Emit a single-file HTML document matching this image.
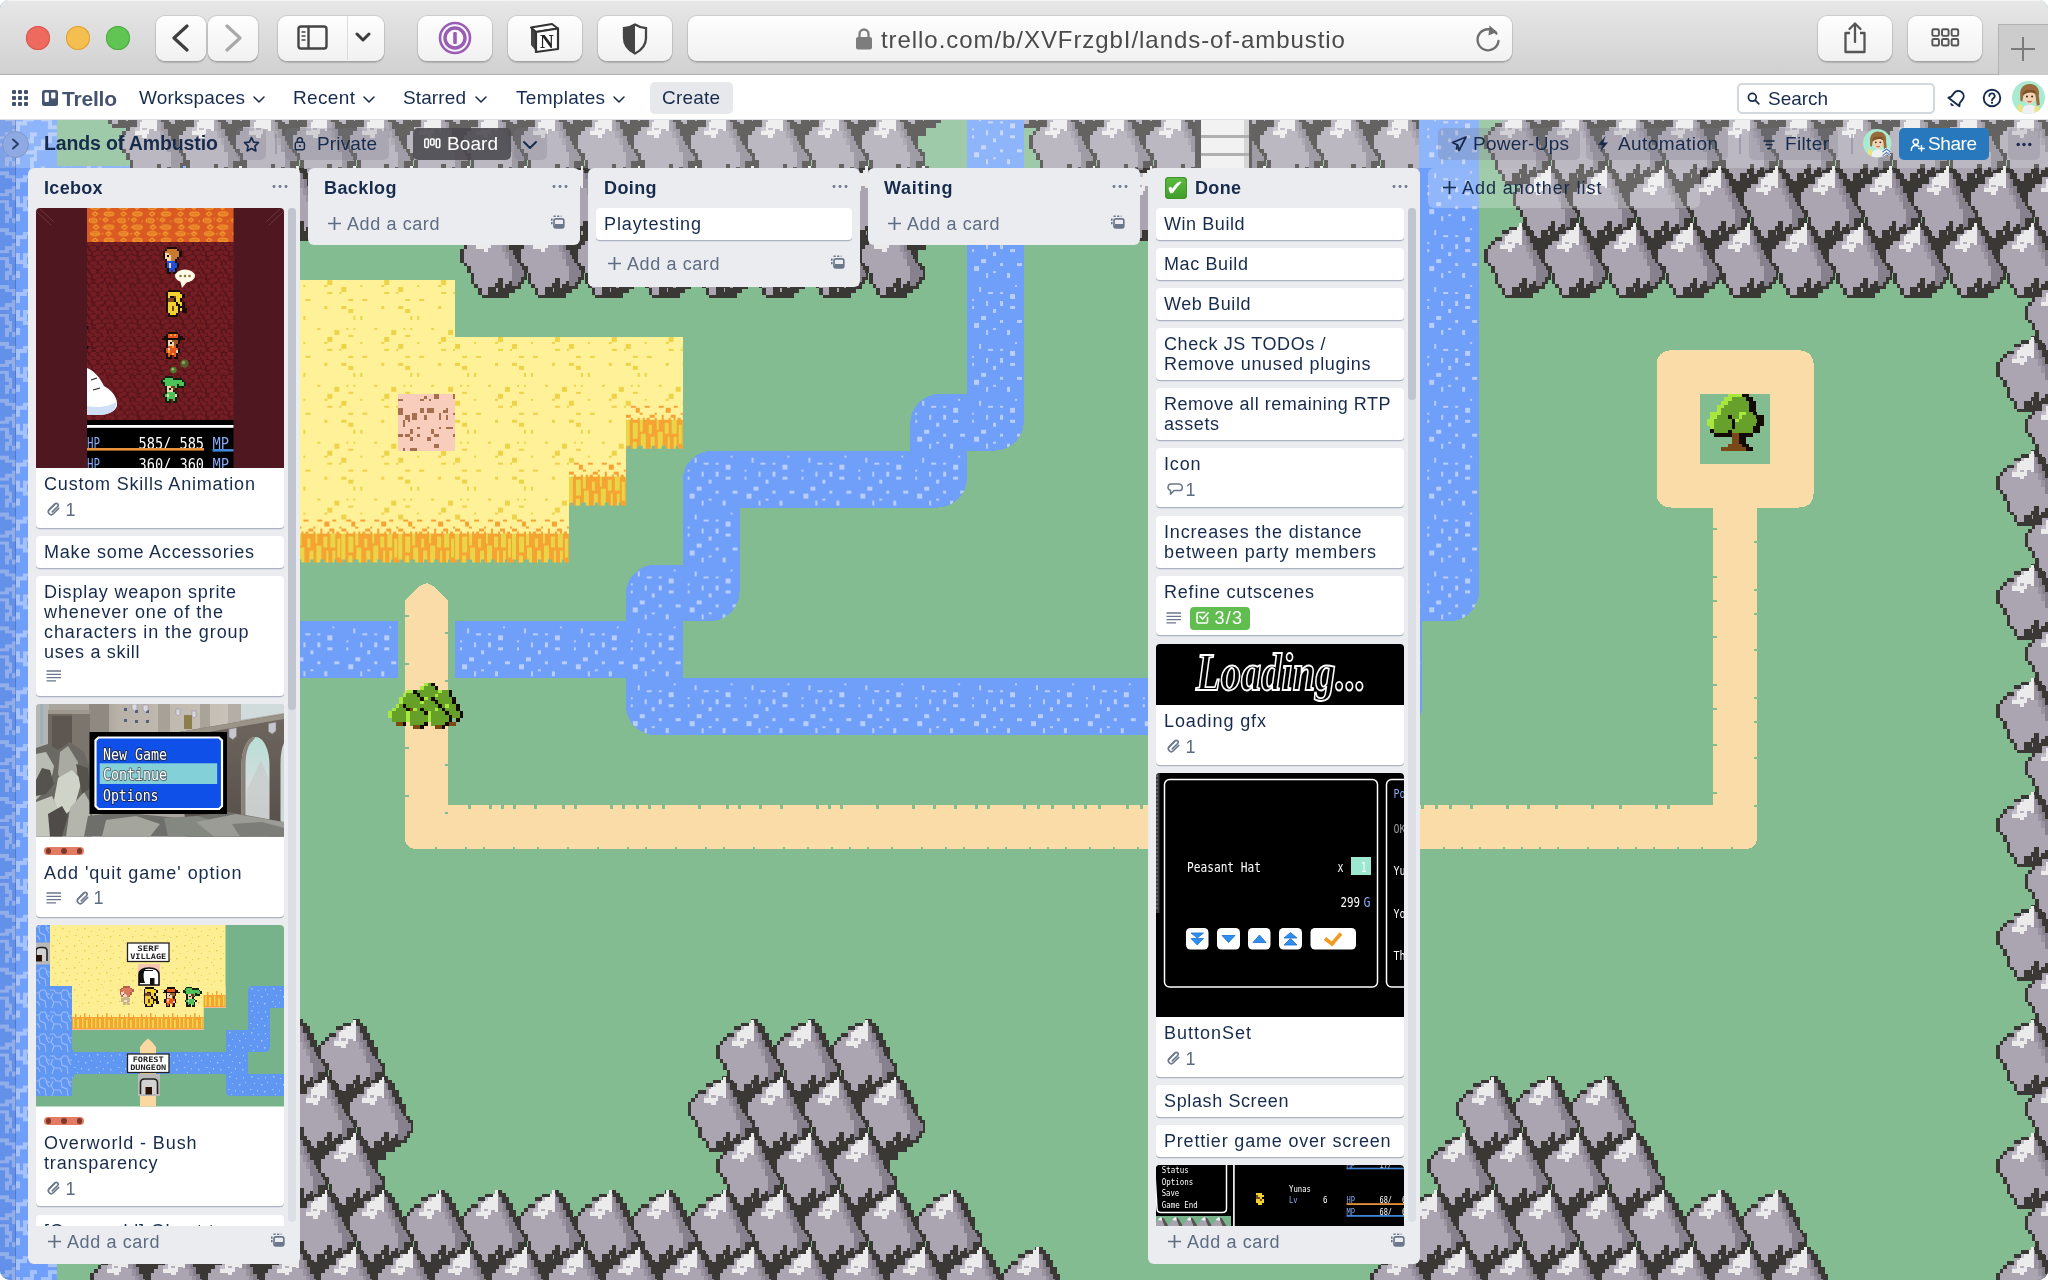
<!DOCTYPE html><html lang="en"><head><meta charset="utf-8"><title>Lands of Ambustio | Trello</title><style>
*{box-sizing:border-box}
html,body{margin:0;padding:0}
body{width:2048px;height:1280px;overflow:hidden;background:#fff;font-family:"Liberation Sans",sans-serif;color:#172b4d}
#win{position:absolute;left:0;top:0;width:2048px;height:1280px;overflow:hidden;border-radius:9px 9px 10px 10px}
.abs{position:absolute}
.t{position:absolute;white-space:nowrap;line-height:1;opacity:.999}
svg{display:block}

#saf{position:absolute;left:0;top:0;width:2048px;height:75px;background:linear-gradient(#e7e7e7,#d1d1d1);border-bottom:1px solid #b1b1b1;box-shadow:inset 0 1px 0 #f4f4f4}
.sb{position:absolute;top:15.5px;height:45px;border-radius:9px;background:linear-gradient(#fefefe,#f1f1f1);box-shadow:0 0 0 1px rgba(0,0,0,.09),0 1.5px 1.5px rgba(0,0,0,.16)}
.tl{position:absolute;top:26px;width:24px;height:24px;border-radius:50%}
#thd{position:absolute;left:0;top:75px;width:2048px;height:45px;background:#fff;border-bottom:1.5px solid #dfe2e7}
#thd .t{color:#172b4d}
#bhd{position:absolute;left:0;top:120px;width:2048px;height:48px;background:rgba(255,255,255,.22)}
.bb{position:absolute;top:128px;height:32px;border-radius:5px;background:rgba(120,120,140,.26)}

.list{position:absolute;top:168px;width:272px;background:#ebecf0;border-radius:6px}
.card{position:absolute;width:248px;background:#fff;border-radius:4px;box-shadow:0 1.3px 0 rgba(9,30,66,.27);overflow:hidden}
.ct{color:#172b4d}
.mut{color:#5e6c84}
</style></head><body><div id="win"><svg width="2048" height="1280" viewBox="0 0 2048 1280" shape-rendering="crispEdges" style="position:absolute;left:0;top:0"><defs><pattern id="pwater" width="48" height="48" patternUnits="userSpaceOnUse" patternTransform="translate(0 -4.4) scale(1.18519)"><rect width="48" height="48" fill="#6f9ff8"/><path d="M40 4h2v2h-2zM10 6h2v4h-2zM18 10h4v2h-4zM28 10h2v2h-2zM36 12h4v4h-4zM4 16h2v2h-2zM16 18h2v4h-2zM28 18h2v4h-2zM4 22h2v2h-2zM36 22h4v2h-4zM22 24h2v4h-2zM12 30h4v4h-4zM28 34h2v2h-2zM42 34h4v2h-4zM6 36h4v4h-4zM22 40h2v2h-2zM16 42h2v4h-2zM34 42h2v4h-2z" fill="#b9cdfa"/></pattern><pattern id="psand" width="48" height="48" patternUnits="userSpaceOnUse" patternTransform="translate(0 -4.4) scale(1.18519)"><rect width="48" height="48" fill="#fff197"/><path d="M36 0h4v4h-4zM34 4h2v2h-2zM16 4h2v2h-2zM0 6h4v4h-4zM46 10h2v2h-2zM36 10h4v2h-4zM6 16h4v2h-4zM18 16h4v2h-4zM0 22h4v2h-4zM34 22h2v2h-2zM6 24h4v4h-4zM10 30h2v4h-2zM16 30h2v4h-2zM4 40h2v2h-2zM10 40h2v2h-2zM28 40h2v2h-2zM42 42h4v4h-4zM6 46h4v2h-4z" fill="#ecd348"/></pattern><pattern id="pwheat" width="48" height="48" patternUnits="userSpaceOnUse" patternTransform="translate(0 -4.4) scale(1.18519)"><rect width="48" height="48" fill="#fff197"/><path d="M36 0h4v4h-4zM34 4h2v2h-2zM16 4h2v2h-2zM0 6h4v4h-4z" fill="#ecd348"/><path d="M4 10h4v2h-4zM16 10h4v2h-4zM28 10h4v2h-4zM40 10h4v2h-4zM8 12h4v4h-4zM34 12h4v4h-4zM0 18h4v2h-4zM12 16h2v2h-2zM24 16h2v2h-2zM46 16h2v2h-2zM20 18h4v2h-4zM30 18h2v2h-2zM38 18h4v2h-4z" fill="#f5a332"/><rect x="0" y="22" width="48" height="24" fill="#f5a332"/><path d="M0 22h3v22h-3zM6 24h4v14h-4zM6 40h3v6h-3zM12 22h2v10h-2zM13 34h4v12h-4zM19 26h3v8h-3zM21 36h3v10h-3zM26 22h2v8h-2zM27 32h4v14h-4zM33 24h3v10h-3zM35 36h2v10h-2zM39 22h4v12h-4zM40 36h3v10h-3zM45 26h2v16h-2z" fill="#ead548"/><path d="M4 20h2v4h-2zM10 20h2v3h-2zM18 20h2v5h-2zM24 20h2v3h-2zM30 20h2v4h-2zM36 20h2v3h-2zM44 20h2v5h-2zM14 20h2v2h-2zM40 20h2v2h-2z" fill="#f5a332"/><rect x="0" y="46" width="48" height="2" fill="#84bc92"/><path d="M2 44h2v2h-2zM10 44h4v2h-4zM22 44h2v2h-2zM30 44h4v2h-4zM42 44h2v2h-2z" fill="#84bc92"/></pattern><pattern id="pocean" width="48" height="48" patternUnits="userSpaceOnUse" patternTransform="translate(0 -4.4) scale(1.18519)"><rect width="48" height="48" fill="#6f9ff8"/><path d="M0 6h6v3h6v3h3v6h-3v3h-6v3h-6M15 12h6v-3h6v-3h9v3h6v6h6M12 21v6h3v6h6v3h9v-3h6v-6h6v-6M0 30h6v6h3v6h-3v6M30 36v6h-3v6M42 21h6M21 33v-6h6v-6h3M36 6V0M12 48v-3h3v-3M27 0v6" fill="none" stroke="#a6c2fb" stroke-width="3" stroke-linecap="square"/></pattern><g id="mt"><path d="M39.7 -0.5L47.1 -0.5L47.1 3L50.6 3L50.6 6.5L54.1 6.5L54.1 13L57.6 13L57.6 20L61.2 20L61.2 27L64.7 27L64.7 39.5L68.3 39.5L68.3 43L71.8 43L71.8 56.5L69 56.5L69 61L65.5 61L65.5 66L59.6 66L59.6 70L54.2 70L54.2 75.1L26.4 75.1L26.4 71.6L22.8 71.6L22.8 64.5L19.3 64.5L19.3 61L15.7 61L15.7 50.3L12.2 50.3L12.2 43.2L8.6 43.2L8.6 39.7L5 39.7L5 25.5L8.6 25.5L8.6 21.5L12.2 21.5L12.2 17.4L15.7 17.4L15.7 13.9L22.8 13.9L22.8 6.9L29.9 6.9L29.9 3.3L39.7 3.3Z" fill="#3a3835"/><path d="M39.7 3.3L43 3.3L43 6.5L43 60L40 60L40 64L33 64L33 71.6L26.4 71.6L26.4 64.5L22.8 64.5L22.8 61L19.3 61L19.3 50.3L15.7 50.3L15.7 43.2L12.2 43.2L12.2 39.7L8.6 39.7L8.6 25.5L12.2 25.5L12.2 21.5L15.7 21.5L15.7 17.4L22.8 17.4L22.8 10.4L29.9 10.4L29.9 6.9L39.7 6.9Z" fill="#aaa5b1"/><path d="M43 22L46.5 22L46.5 29L50 29L50 36L53.6 36L53.6 43L57.2 43L57.2 57.5L53.6 57.5L53.6 61L50 61L50 64.5L47.5 64.5L47.5 55L43 55Z" fill="#aaa5b1"/><path d="M43 3.3L43.6 3.3L43.6 6.5L47.1 6.5L47.1 13L50.6 13L50.6 20L54.1 20L54.1 27L57.6 27L57.6 32L59.5 32L59.5 36L62 36L62 39.5L64.7 39.5L64.7 43L67 43L67 46.5L69.3 46.5L69.3 54L66 54L66 59L62.5 59L62.5 63L57.2 63L57.2 43L53.6 43L53.6 36L50 36L50 29L46.5 29L46.5 22L43 22Z" fill="#86818c"/><path d="M43 6.5L45 6.5L45 13L47.5 13L47.5 22L50.6 22L50.6 29L53.6 29L53.6 36L50 36L50 29L46.5 29L46.5 22L43 22Z" fill="#98939e"/><path d="M40.3 0L43 0L43 21.3L40.3 21.3L40.3 19.4L35.6 19.4L35.6 24.8L33.3 24.8L33.3 28.3L28.6 28.3L28.6 26L21.2 26L21.2 21.7L26.2 21.7L26.2 12.7L28.6 12.7L28.6 10.4L33.3 10.4L33.3 6.9L37.9 6.9L37.9 3.3L40.3 3.3Z" fill="#ebebeb"/><path d="M22.8 17.4L26.2 17.4L26.2 21.7L21.2 21.7L21.2 19L22.8 19Z" fill="#c2bdc9"/><path d="M29.9 6.9L33.3 6.9L33.3 10.4L29.9 10.4Z" fill="#c2bdc9"/><rect x="28.6" y="18.8" width="4.5" height="2.2" fill="#b5b0bc"/><path d="M43 55h4.5v9.5h-4.5zM36.5 64h3.5v7.6h-3.5zM40 68h3v7h-3z" fill="#3a3835"/><path d="M40.8 64.5h1.6v4h-1.6z" fill="#aaa5b1"/></g></defs><rect width="2048" height="1280" fill="#84bc92"/><path d="M0 0H56.9V166.3H284.4V1247.2H56.9V1280H0Z" fill="url(#pocean)"/><path d="M56.9 280H455.1V336.9H682.7V393.8H625.8V450.7H568.9V507.6H56.9Z" fill="url(#psand)"/><path d="M625.8 393.8h56.9v55.4h-56.9zM568.9 450.7h56.9v55.4h-56.9zM56.9 507.6H568.9V563H56.9Z" fill="url(#pwheat)"/><rect x="398.2" y="393.8" width="56.9" height="56.9" fill="#f8cdbb"/><path d="M398.2 398.6h4.7v2.4h-4.7zM419.6 398.6h4.7v2.4h-4.7zM424.3 396.2h2.4v2.4h-2.4zM429 398.6h2.4v2.4h-2.4zM433.8 393.8h4.7v4.7h-4.7zM452.7 393.8h2.4v4.7h-2.4zM398.2 408h4.7v7.1h-4.7zM419.6 408h4.7v4.7h-4.7zM426.7 408h7.1v4.7h-7.1zM445.6 408h2.4v4.7h-2.4zM405.3 415.2h4.7v4.7h-4.7zM412.4 412.8h4.7v7.1h-4.7zM424.3 415.2h2.4v4.7h-2.4zM438.5 412.8h2.4v7.1h-2.4zM443.3 410.4h2.4v2.4h-2.4zM445.6 415.2h2.4v4.7h-2.4zM452.7 412.8h2.4v2.4h-2.4zM403 419.9h2.4v7.1h-2.4zM407.7 419.9h2.4v2.4h-2.4zM417.2 427h2.4v2.4h-2.4zM438.5 427h2.4v2.4h-2.4zM445.6 427h7.1v2.4h-7.1zM410.1 429.4h2.4v4.7h-2.4zM431.4 429.4h2.4v4.7h-2.4zM398.2 434.1h4.7v2.4h-4.7zM405.3 434.1h4.7v2.4h-4.7zM417.2 434.1h2.4v2.4h-2.4zM433.8 434.1h4.7v2.4h-4.7zM452.7 434.1h2.4v2.4h-2.4zM410.1 436.5h2.4v4.7h-2.4zM426.7 436.5h4.7v4.7h-4.7zM433.8 443.6h4.7v4.7h-4.7zM403 448.3h2.4v2.4h-2.4zM410.1 448.3h7.1v2.4h-7.1z" fill="#a66f4f"/><path d="M967.1 52.5L1024 52.5L1024 420.7A30 30 0 0 1 994 450.7L967.1 450.7L967.1 477.6A30 30 0 0 1 937.1 507.6L739.6 507.6L739.6 591.4A30 30 0 0 1 709.6 621.4L682.7 621.4L682.7 678.3L1365.3 678.3L1365.3 594.5A30 30 0 0 1 1395.3 564.5L1422.2 564.5L1422.2 52.5L1479.1 52.5L1479.1 591.4A30 30 0 0 1 1449.1 621.4L1422.2 621.4L1422.2 705.2A30 30 0 0 1 1392.2 735.2L655.8 735.2A30 30 0 0 1 625.8 705.2L625.8 678.3L284.4 678.3L284.4 621.4L625.8 621.4L625.8 594.5A30 30 0 0 1 655.8 564.5L682.7 564.5L682.7 480.7A30 30 0 0 1 712.7 450.7L910.2 450.7L910.2 423.8A30 30 0 0 1 940.2 393.8L967.1 393.8Z" fill="url(#pwater)"/><rect x="398.2" y="620.4" width="56.9" height="58.9" fill="#84bc92"/><path d="M404.9 600.5L411.9 593.5 L418.9 586.5 L426.7 583 L434.4 586.5 L448.4 600.5L448.4 805.4 L1713.4 805.4 L1713.4 502.6L1756.9 502.6 L1756.9 836.9Q1756.9 848.9 1744.9 848.9L416.9 848.9 Q404.9 848.9 404.9 836.9 Z" fill="#fadca8"/><path d="M1672.5 350.3H1797.7Q1813.7 350.3 1813.7 366.3V491.6Q1813.7 507.6 1797.7 507.6H1672.5Q1656.5 507.6 1656.5 491.6V366.3Q1656.5 350.3 1672.5 350.3ZM1700 393.8V464.1H1770.3V393.8Z" fill="#fadca8" fill-rule="evenodd"/><path d="M468.4 805.4h2.4v3.6h-2.4zM489.4 805.4h2.4v3.6h-2.4zM501.4 805.4h2.4v3.6h-2.4zM513.4 805.4h2.4v3.6h-2.4zM534.4 805.4h2.4v3.6h-2.4zM562.4 805.4h2.4v3.6h-2.4zM574.4 805.4h2.4v3.6h-2.4zM610.4 805.4h2.4v3.6h-2.4zM622.4 805.4h2.4v3.6h-2.4zM636.4 805.4h2.4v3.6h-2.4zM648.4 805.4h2.4v3.6h-2.4zM662.4 805.4h2.4v3.6h-2.4zM698.4 805.4h2.4v3.6h-2.4zM726.4 805.4h2.4v3.6h-2.4zM738.4 805.4h2.4v3.6h-2.4zM759.4 805.4h2.4v3.6h-2.4zM780.4 805.4h2.4v3.6h-2.4zM816.4 805.4h2.4v3.6h-2.4zM828.4 805.4h2.4v3.6h-2.4zM840.4 805.4h2.4v3.6h-2.4zM876.4 805.4h2.4v3.6h-2.4zM912.4 805.4h2.4v3.6h-2.4zM933.4 805.4h2.4v3.6h-2.4zM954.4 805.4h2.4v3.6h-2.4zM975.4 805.4h2.4v3.6h-2.4zM987.4 805.4h2.4v3.6h-2.4zM1023.4 805.4h2.4v3.6h-2.4zM1037.4 805.4h2.4v3.6h-2.4zM1051.4 805.4h2.4v3.6h-2.4zM1072.4 805.4h2.4v3.6h-2.4zM1084.4 805.4h2.4v3.6h-2.4zM1098.4 805.4h2.4v3.6h-2.4zM1126.4 805.4h2.4v3.6h-2.4zM1140.4 805.4h2.4v3.6h-2.4zM1168.4 805.4h2.4v3.6h-2.4zM1204.4 805.4h2.4v3.6h-2.4zM1216.4 805.4h2.4v3.6h-2.4zM1252.4 805.4h2.4v3.6h-2.4zM1288.4 805.4h2.4v3.6h-2.4zM1324.4 805.4h2.4v3.6h-2.4zM1336.4 805.4h2.4v3.6h-2.4zM1372.4 805.4h2.4v3.6h-2.4zM1393.4 805.4h2.4v3.6h-2.4zM1421.4 805.4h2.4v3.6h-2.4zM1435.4 805.4h2.4v3.6h-2.4zM1449.4 805.4h2.4v3.6h-2.4zM1470.4 805.4h2.4v3.6h-2.4zM1506.4 805.4h2.4v3.6h-2.4zM1527.4 805.4h2.4v3.6h-2.4zM1555.4 805.4h2.4v3.6h-2.4zM1591.4 805.4h2.4v3.6h-2.4zM1619.4 805.4h2.4v3.6h-2.4zM1655.4 805.4h2.4v3.6h-2.4zM1667.4 805.4h2.4v3.6h-2.4zM404.9 614.5h3.6v2.4h-3.6zM445.4 631.5h3v2.4h-3zM404.9 662.5h3.6v2.4h-3.6zM445.4 679.5h3v2.4h-3zM404.9 698.5h3.6v2.4h-3.6zM445.4 715.5h3v2.4h-3zM404.9 746.5h3.6v2.4h-3.6zM445.4 763.5h3v2.4h-3zM404.9 794.5h3.6v2.4h-3.6zM445.4 811.5h3v2.4h-3zM1713.4 527.6h3.6v2.4h-3.6zM1753.9 540.6h3v2.4h-3zM1713.4 575.6h3.6v2.4h-3.6zM1753.9 588.6h3v2.4h-3zM1713.4 599.6h3.6v2.4h-3.6zM1753.9 612.6h3v2.4h-3zM1713.4 635.6h3.6v2.4h-3.6zM1753.9 648.6h3v2.4h-3zM1713.4 683.6h3.6v2.4h-3.6zM1753.9 696.6h3v2.4h-3zM1713.4 707.6h3.6v2.4h-3.6zM1753.9 720.6h3v2.4h-3zM1713.4 743.6h3.6v2.4h-3.6zM1753.9 756.6h3v2.4h-3zM1713.4 791.6h3.6v2.4h-3.6zM1753.9 804.6h3v2.4h-3zM434.9 846.5h2.4v2.4h-2.4zM464.9 846.5h2.4v2.4h-2.4zM482.9 846.5h2.4v2.4h-2.4zM512.9 846.5h2.4v2.4h-2.4zM536.9 846.5h2.4v2.4h-2.4zM566.9 846.5h2.4v2.4h-2.4zM596.9 846.5h2.4v2.4h-2.4zM626.9 846.5h2.4v2.4h-2.4zM644.9 846.5h2.4v2.4h-2.4zM674.9 846.5h2.4v2.4h-2.4zM704.9 846.5h2.4v2.4h-2.4zM722.9 846.5h2.4v2.4h-2.4zM752.9 846.5h2.4v2.4h-2.4zM782.9 846.5h2.4v2.4h-2.4zM806.9 846.5h2.4v2.4h-2.4zM830.9 846.5h2.4v2.4h-2.4zM848.9 846.5h2.4v2.4h-2.4zM866.9 846.5h2.4v2.4h-2.4zM890.9 846.5h2.4v2.4h-2.4zM920.9 846.5h2.4v2.4h-2.4zM944.9 846.5h2.4v2.4h-2.4zM962.9 846.5h2.4v2.4h-2.4zM986.9 846.5h2.4v2.4h-2.4zM1004.9 846.5h2.4v2.4h-2.4zM1028.9 846.5h2.4v2.4h-2.4zM1046.9 846.5h2.4v2.4h-2.4zM1064.9 846.5h2.4v2.4h-2.4zM1088.9 846.5h2.4v2.4h-2.4zM1112.9 846.5h2.4v2.4h-2.4zM1136.9 846.5h2.4v2.4h-2.4zM1154.9 846.5h2.4v2.4h-2.4zM1172.9 846.5h2.4v2.4h-2.4zM1202.9 846.5h2.4v2.4h-2.4zM1232.9 846.5h2.4v2.4h-2.4zM1250.9 846.5h2.4v2.4h-2.4zM1274.9 846.5h2.4v2.4h-2.4zM1304.9 846.5h2.4v2.4h-2.4zM1334.9 846.5h2.4v2.4h-2.4zM1358.9 846.5h2.4v2.4h-2.4zM1388.9 846.5h2.4v2.4h-2.4zM1412.9 846.5h2.4v2.4h-2.4zM1442.9 846.5h2.4v2.4h-2.4zM1460.9 846.5h2.4v2.4h-2.4zM1478.9 846.5h2.4v2.4h-2.4zM1502.9 846.5h2.4v2.4h-2.4zM1520.9 846.5h2.4v2.4h-2.4zM1538.9 846.5h2.4v2.4h-2.4zM1556.9 846.5h2.4v2.4h-2.4zM1586.9 846.5h2.4v2.4h-2.4zM1616.9 846.5h2.4v2.4h-2.4zM1634.9 846.5h2.4v2.4h-2.4zM1652.9 846.5h2.4v2.4h-2.4zM1676.9 846.5h2.4v2.4h-2.4zM1700.9 846.5h2.4v2.4h-2.4zM1730.9 846.5h2.4v2.4h-2.4z" fill="#84bc92"/><path d="M1728 393.8h14.2v3.8h-14.2zM1724.4 397.4h7.1v3.8h-7.1zM1720.9 400.9h7.1v3.8h-7.1zM1717.3 404.5h7.1v3.8h-7.1zM1717.3 408h3.6v3.8h-3.6zM1710.2 411.6h10.7v3.8h-10.7zM1738.7 411.6h7.1v3.8h-7.1zM1710.2 415.2h7.1v3.8h-7.1zM1738.7 415.2h3.6v3.8h-3.6zM1706.7 418.7h7.1v3.8h-7.1zM1735.1 418.7h3.6v3.8h-3.6zM1706.7 422.3h7.1v3.8h-7.1zM1710.2 425.8h3.6v3.8h-3.6z" fill="#a9e73f"/><path d="M1742.2 393.8h7.1v3.8h-7.1zM1745.8 397.4h7.1v3.8h-7.1zM1749.3 400.9h7.1v3.8h-7.1zM1749.3 404.5h7.1v3.8h-7.1zM1749.3 408h7.1v3.8h-7.1zM1752.9 411.6h3.6v3.8h-3.6zM1728 415.2h3.6v3.8h-3.6zM1756.4 415.2h7.1v3.8h-7.1zM1731.6 418.7h3.6v3.8h-3.6zM1756.4 418.7h7.1v3.8h-7.1zM1731.6 422.3h3.6v3.8h-3.6zM1756.4 422.3h7.1v3.8h-7.1zM1731.6 425.8h3.6v3.8h-3.6zM1752.9 425.8h7.1v3.8h-7.1zM1710.2 429.4h3.6v3.8h-3.6zM1728 429.4h3.6v3.8h-3.6zM1752.9 429.4h7.1v3.8h-7.1zM1713.8 432.9h17.8v3.8h-17.8zM1738.7 432.9h14.2v3.8h-14.2zM1738.7 436.5h7.1v3.8h-7.1zM1738.7 440h7.1v3.8h-7.1zM1742.2 443.6h7.1v3.8h-7.1zM1745.8 447.2h7.1v3.8h-7.1z" fill="#140a04"/><path d="M1731.6 397.4h14.2v3.8h-14.2zM1728 400.9h21.3v3.8h-21.3zM1724.4 404.5h24.9v3.8h-24.9zM1720.9 408h28.4v3.8h-28.4zM1720.9 411.6h17.8v3.8h-17.8zM1745.8 411.6h7.1v3.8h-7.1zM1717.3 415.2h10.7v3.8h-10.7zM1731.6 415.2h7.1v3.8h-7.1zM1742.2 415.2h14.2v3.8h-14.2zM1713.8 418.7h17.8v3.8h-17.8zM1738.7 418.7h17.8v3.8h-17.8zM1713.8 422.3h17.8v3.8h-17.8zM1735.1 422.3h21.3v3.8h-21.3zM1713.8 425.8h17.8v3.8h-17.8zM1735.1 425.8h17.8v3.8h-17.8zM1713.8 429.4h14.2v3.8h-14.2zM1731.6 429.4h21.3v3.8h-21.3z" fill="#67a02a"/><path d="M1731.6 432.9h7.1v3.8h-7.1zM1731.6 436.5h7.1v3.8h-7.1zM1731.6 440h7.1v3.8h-7.1zM1728 443.6h14.2v3.8h-14.2zM1720.9 447.2h24.9v3.8h-24.9z" fill="#7a4716"/><g shape-rendering="crispEdges"><use href="#mt" x="85.3" y="52.5"/><use href="#mt" x="142.2" y="52.5"/><use href="#mt" x="199.1" y="52.5"/><use href="#mt" x="256" y="52.5"/><use href="#mt" x="312.9" y="52.5"/><use href="#mt" x="369.8" y="52.5"/><use href="#mt" x="426.7" y="52.5"/><use href="#mt" x="483.6" y="52.5"/><use href="#mt" x="540.4" y="52.5"/><use href="#mt" x="597.3" y="52.5"/><use href="#mt" x="654.2" y="52.5"/><use href="#mt" x="711.1" y="52.5"/><use href="#mt" x="768" y="52.5"/><use href="#mt" x="824.9" y="52.5"/><use href="#mt" x="881.8" y="52.5"/><use href="#mt" x="995.6" y="52.5"/><use href="#mt" x="1052.4" y="52.5"/><use href="#mt" x="1109.3" y="52.5"/><use href="#mt" x="1166.2" y="52.5"/><use href="#mt" x="1223.1" y="52.5"/><use href="#mt" x="1280" y="52.5"/><use href="#mt" x="1336.9" y="52.5"/><use href="#mt" x="1507.6" y="52.5"/><use href="#mt" x="1564.4" y="52.5"/><use href="#mt" x="1621.3" y="52.5"/><use href="#mt" x="1678.2" y="52.5"/><use href="#mt" x="1735.1" y="52.5"/><use href="#mt" x="1792" y="52.5"/><use href="#mt" x="1848.9" y="52.5"/><use href="#mt" x="1905.8" y="52.5"/><use href="#mt" x="1962.7" y="52.5"/><use href="#mt" x="2019.6" y="52.5"/><path d="M169.8 125.4h17v11h-17zM147.8 104.4h9v10h-9zM226.7 125.4h17v11h-17zM204.7 104.4h9v10h-9zM283.6 125.4h17v11h-17zM261.6 104.4h9v10h-9zM340.4 125.4h17v11h-17zM318.4 104.4h9v10h-9zM397.3 125.4h17v11h-17zM375.3 104.4h9v10h-9zM454.2 125.4h17v11h-17zM432.2 104.4h9v10h-9zM511.1 125.4h17v11h-17zM489.1 104.4h9v10h-9zM568 125.4h17v11h-17zM546 104.4h9v10h-9zM624.9 125.4h17v11h-17zM602.9 104.4h9v10h-9zM681.8 125.4h17v11h-17zM659.8 104.4h9v10h-9zM738.7 125.4h17v11h-17zM716.7 104.4h9v10h-9zM795.6 125.4h17v11h-17zM773.6 104.4h9v10h-9zM852.4 125.4h17v11h-17zM830.4 104.4h9v10h-9zM909.3 125.4h17v11h-17zM887.3 104.4h9v10h-9zM1080 125.4h17v11h-17zM1058 104.4h9v10h-9zM1136.9 125.4h17v11h-17zM1114.9 104.4h9v10h-9zM1193.8 125.4h17v11h-17zM1171.8 104.4h9v10h-9zM1250.7 125.4h17v11h-17zM1228.7 104.4h9v10h-9zM1307.6 125.4h17v11h-17zM1285.6 104.4h9v10h-9zM1364.4 125.4h17v11h-17zM1342.4 104.4h9v10h-9zM1399.3 104.4h9v10h-9zM1535.1 125.4h17v11h-17zM1592 125.4h17v11h-17zM1570 104.4h9v10h-9zM1648.9 125.4h17v11h-17zM1626.9 104.4h9v10h-9zM1705.8 125.4h17v11h-17zM1683.8 104.4h9v10h-9zM1762.7 125.4h17v11h-17zM1740.7 104.4h9v10h-9zM1819.6 125.4h17v11h-17zM1797.6 104.4h9v10h-9zM1876.4 125.4h17v11h-17zM1854.4 104.4h9v10h-9zM1933.3 125.4h17v11h-17zM1911.3 104.4h9v10h-9zM1990.2 125.4h17v11h-17zM1968.2 104.4h9v10h-9zM2047.1 125.4h17v11h-17zM2025.1 104.4h9v10h-9z" fill="#3a3835"/><use href="#mt" x="113.8" y="109.4"/><use href="#mt" x="170.7" y="109.4"/><use href="#mt" x="227.6" y="109.4"/><use href="#mt" x="284.4" y="109.4"/><use href="#mt" x="341.3" y="109.4"/><use href="#mt" x="398.2" y="109.4"/><use href="#mt" x="455.1" y="109.4"/><use href="#mt" x="512" y="109.4"/><use href="#mt" x="568.9" y="109.4"/><use href="#mt" x="625.8" y="109.4"/><use href="#mt" x="682.7" y="109.4"/><use href="#mt" x="739.6" y="109.4"/><use href="#mt" x="796.4" y="109.4"/><use href="#mt" x="853.3" y="109.4"/><use href="#mt" x="1024" y="109.4"/><use href="#mt" x="1080.9" y="109.4"/><use href="#mt" x="1137.8" y="109.4"/><use href="#mt" x="1194.7" y="109.4"/><use href="#mt" x="1251.6" y="109.4"/><use href="#mt" x="1308.4" y="109.4"/><use href="#mt" x="1365.3" y="109.4"/><use href="#mt" x="1479.1" y="109.4"/><use href="#mt" x="1536" y="109.4"/><use href="#mt" x="1592.9" y="109.4"/><use href="#mt" x="1649.8" y="109.4"/><use href="#mt" x="1706.7" y="109.4"/><use href="#mt" x="1763.6" y="109.4"/><use href="#mt" x="1820.4" y="109.4"/><use href="#mt" x="1877.3" y="109.4"/><use href="#mt" x="1934.2" y="109.4"/><use href="#mt" x="1991.1" y="109.4"/><path d="M255.1 182.3h17v11h-17zM233.1 161.3h9v10h-9zM312 182.3h17v11h-17zM290 161.3h9v10h-9zM368.9 182.3h17v11h-17zM346.9 161.3h9v10h-9zM425.8 182.3h17v11h-17zM403.8 161.3h9v10h-9zM482.7 182.3h17v11h-17zM460.7 161.3h9v10h-9zM539.6 182.3h17v11h-17zM517.6 161.3h9v10h-9zM596.4 182.3h17v11h-17zM574.4 161.3h9v10h-9zM653.3 182.3h17v11h-17zM631.3 161.3h9v10h-9zM710.2 182.3h17v11h-17zM688.2 161.3h9v10h-9zM767.1 182.3h17v11h-17zM745.1 161.3h9v10h-9zM824 182.3h17v11h-17zM802 161.3h9v10h-9zM880.9 182.3h17v11h-17zM858.9 161.3h9v10h-9zM915.8 161.3h9v10h-9zM1108.4 182.3h17v11h-17zM1086.4 161.3h9v10h-9zM1165.3 182.3h17v11h-17zM1143.3 161.3h9v10h-9zM1222.2 182.3h17v11h-17zM1200.2 161.3h9v10h-9zM1279.1 182.3h17v11h-17zM1257.1 161.3h9v10h-9zM1336 182.3h17v11h-17zM1314 161.3h9v10h-9zM1392.9 182.3h17v11h-17zM1370.9 161.3h9v10h-9zM1563.6 182.3h17v11h-17zM1541.6 161.3h9v10h-9zM1620.4 182.3h17v11h-17zM1598.4 161.3h9v10h-9zM1677.3 182.3h17v11h-17zM1655.3 161.3h9v10h-9zM1734.2 182.3h17v11h-17zM1712.2 161.3h9v10h-9zM1791.1 182.3h17v11h-17zM1769.1 161.3h9v10h-9zM1848 182.3h17v11h-17zM1826 161.3h9v10h-9zM1904.9 182.3h17v11h-17zM1882.9 161.3h9v10h-9zM1961.8 182.3h17v11h-17zM1939.8 161.3h9v10h-9zM2018.7 182.3h17v11h-17zM1996.7 161.3h9v10h-9zM2053.6 161.3h9v10h-9z" fill="#3a3835"/><use href="#mt" x="199.1" y="166.3"/><use href="#mt" x="256" y="166.3"/><use href="#mt" x="312.9" y="166.3"/><use href="#mt" x="369.8" y="166.3"/><use href="#mt" x="426.7" y="166.3"/><use href="#mt" x="483.6" y="166.3"/><use href="#mt" x="540.4" y="166.3"/><use href="#mt" x="597.3" y="166.3"/><use href="#mt" x="654.2" y="166.3"/><use href="#mt" x="711.1" y="166.3"/><use href="#mt" x="768" y="166.3"/><use href="#mt" x="824.9" y="166.3"/><use href="#mt" x="881.8" y="166.3"/><use href="#mt" x="1052.4" y="166.3"/><use href="#mt" x="1109.3" y="166.3"/><use href="#mt" x="1166.2" y="166.3"/><use href="#mt" x="1223.1" y="166.3"/><use href="#mt" x="1280" y="166.3"/><use href="#mt" x="1336.9" y="166.3"/><use href="#mt" x="1507.6" y="166.3"/><use href="#mt" x="1564.4" y="166.3"/><use href="#mt" x="1621.3" y="166.3"/><use href="#mt" x="1678.2" y="166.3"/><use href="#mt" x="1735.1" y="166.3"/><use href="#mt" x="1792" y="166.3"/><use href="#mt" x="1848.9" y="166.3"/><use href="#mt" x="1905.8" y="166.3"/><use href="#mt" x="1962.7" y="166.3"/><use href="#mt" x="2019.6" y="166.3"/><path d="M511.1 239.2h17v11h-17zM489.1 218.2h9v10h-9zM568 239.2h17v11h-17zM546 218.2h9v10h-9zM624.9 239.2h17v11h-17zM602.9 218.2h9v10h-9zM681.8 239.2h17v11h-17zM659.8 218.2h9v10h-9zM738.7 239.2h17v11h-17zM716.7 218.2h9v10h-9zM795.6 239.2h17v11h-17zM773.6 218.2h9v10h-9zM852.4 239.2h17v11h-17zM830.4 218.2h9v10h-9zM909.3 239.2h17v11h-17zM887.3 218.2h9v10h-9zM1535.1 239.2h17v11h-17zM1592 239.2h17v11h-17zM1570 218.2h9v10h-9zM1648.9 239.2h17v11h-17zM1626.9 218.2h9v10h-9zM1705.8 239.2h17v11h-17zM1683.8 218.2h9v10h-9zM1762.7 239.2h17v11h-17zM1740.7 218.2h9v10h-9zM1819.6 239.2h17v11h-17zM1797.6 218.2h9v10h-9zM1876.4 239.2h17v11h-17zM1854.4 218.2h9v10h-9zM1933.3 239.2h17v11h-17zM1911.3 218.2h9v10h-9zM1990.2 239.2h17v11h-17zM1968.2 218.2h9v10h-9zM2047.1 239.2h17v11h-17zM2025.1 218.2h9v10h-9z" fill="#3a3835"/><use href="#mt" x="455.1" y="223.2"/><use href="#mt" x="512" y="223.2"/><use href="#mt" x="568.9" y="223.2"/><use href="#mt" x="625.8" y="223.2"/><use href="#mt" x="682.7" y="223.2"/><use href="#mt" x="739.6" y="223.2"/><use href="#mt" x="796.4" y="223.2"/><use href="#mt" x="853.3" y="223.2"/><use href="#mt" x="1479.1" y="223.2"/><use href="#mt" x="1536" y="223.2"/><use href="#mt" x="1592.9" y="223.2"/><use href="#mt" x="1649.8" y="223.2"/><use href="#mt" x="1706.7" y="223.2"/><use href="#mt" x="1763.6" y="223.2"/><use href="#mt" x="1820.4" y="223.2"/><use href="#mt" x="1877.3" y="223.2"/><use href="#mt" x="1934.2" y="223.2"/><use href="#mt" x="1991.1" y="223.2"/><path d="M2053.6 275h9v10h-9z" fill="#3a3835"/><use href="#mt" x="2019.6" y="280"/><path d="M2047.1 352.9h17v11h-17z" fill="#3a3835"/><use href="#mt" x="1991.1" y="336.9"/><path d="M2053.6 388.8h9v10h-9z" fill="#3a3835"/><use href="#mt" x="2019.6" y="393.8"/><path d="M2047.1 466.7h17v11h-17z" fill="#3a3835"/><use href="#mt" x="1991.1" y="450.7"/><path d="M2053.6 502.6h9v10h-9z" fill="#3a3835"/><use href="#mt" x="2019.6" y="507.6"/><path d="M2047.1 580.5h17v11h-17z" fill="#3a3835"/><use href="#mt" x="1991.1" y="564.5"/><path d="M2053.6 616.4h9v10h-9z" fill="#3a3835"/><use href="#mt" x="2019.6" y="621.4"/><path d="M2047.1 694.3h17v11h-17z" fill="#3a3835"/><use href="#mt" x="1991.1" y="678.3"/><path d="M2053.6 730.2h9v10h-9z" fill="#3a3835"/><use href="#mt" x="2019.6" y="735.2"/><path d="M2047.1 808h17v11h-17z" fill="#3a3835"/><use href="#mt" x="1991.1" y="792"/><path d="M2053.6 843.9h9v10h-9z" fill="#3a3835"/><use href="#mt" x="2019.6" y="848.9"/><path d="M2047.1 921.8h17v11h-17z" fill="#3a3835"/><use href="#mt" x="1991.1" y="905.8"/><path d="M2053.6 957.7h9v10h-9z" fill="#3a3835"/><use href="#mt" x="2019.6" y="962.7"/><path d="M2047.1 1035.6h17v11h-17z" fill="#3a3835"/><use href="#mt" x="1991.1" y="1019.6"/><use href="#mt" x="199.1" y="1019.6"/><use href="#mt" x="256" y="1019.6"/><use href="#mt" x="312.9" y="1019.6"/><use href="#mt" x="711.1" y="1019.6"/><use href="#mt" x="768" y="1019.6"/><use href="#mt" x="824.9" y="1019.6"/><path d="M2053.6 1071.5h9v10h-9zM226.7 1092.5h17v11h-17zM283.6 1092.5h17v11h-17zM261.6 1071.5h9v10h-9zM340.4 1092.5h17v11h-17zM318.4 1071.5h9v10h-9zM375.3 1071.5h9v10h-9zM738.7 1092.5h17v11h-17zM795.6 1092.5h17v11h-17zM773.6 1071.5h9v10h-9zM852.4 1092.5h17v11h-17zM830.4 1071.5h9v10h-9zM887.3 1071.5h9v10h-9z" fill="#3a3835"/><use href="#mt" x="2019.6" y="1076.5"/><use href="#mt" x="170.7" y="1076.5"/><use href="#mt" x="227.6" y="1076.5"/><use href="#mt" x="284.4" y="1076.5"/><use href="#mt" x="341.3" y="1076.5"/><use href="#mt" x="682.7" y="1076.5"/><use href="#mt" x="739.6" y="1076.5"/><use href="#mt" x="796.4" y="1076.5"/><use href="#mt" x="853.3" y="1076.5"/><use href="#mt" x="1450.7" y="1076.5"/><use href="#mt" x="1507.6" y="1076.5"/><use href="#mt" x="1564.4" y="1076.5"/><path d="M2047.1 1149.4h17v11h-17zM198.2 1149.4h17v11h-17zM255.1 1149.4h17v11h-17zM233.1 1128.4h9v10h-9zM312 1149.4h17v11h-17zM290 1128.4h9v10h-9zM368.9 1149.4h17v11h-17zM346.9 1128.4h9v10h-9zM767.1 1149.4h17v11h-17zM745.1 1128.4h9v10h-9zM824 1149.4h17v11h-17zM802 1128.4h9v10h-9zM880.9 1149.4h17v11h-17zM858.9 1128.4h9v10h-9zM1478.2 1149.4h17v11h-17zM1535.1 1149.4h17v11h-17zM1513.1 1128.4h9v10h-9zM1592 1149.4h17v11h-17zM1570 1128.4h9v10h-9zM1626.9 1128.4h9v10h-9z" fill="#3a3835"/><use href="#mt" x="1991.1" y="1133.4"/><use href="#mt" x="142.2" y="1133.4"/><use href="#mt" x="199.1" y="1133.4"/><use href="#mt" x="256" y="1133.4"/><use href="#mt" x="312.9" y="1133.4"/><use href="#mt" x="711.1" y="1133.4"/><use href="#mt" x="768" y="1133.4"/><use href="#mt" x="824.9" y="1133.4"/><use href="#mt" x="1422.2" y="1133.4"/><use href="#mt" x="1479.1" y="1133.4"/><use href="#mt" x="1536" y="1133.4"/><use href="#mt" x="1592.9" y="1133.4"/><path d="M2053.6 1185.3h9v10h-9zM169.8 1206.3h17v11h-17zM226.7 1206.3h17v11h-17zM204.7 1185.3h9v10h-9zM283.6 1206.3h17v11h-17zM261.6 1185.3h9v10h-9zM340.4 1206.3h17v11h-17zM318.4 1185.3h9v10h-9zM375.3 1185.3h9v10h-9zM738.7 1206.3h17v11h-17zM795.6 1206.3h17v11h-17zM773.6 1185.3h9v10h-9zM852.4 1206.3h17v11h-17zM830.4 1185.3h9v10h-9zM887.3 1185.3h9v10h-9zM1449.8 1206.3h17v11h-17zM1506.7 1206.3h17v11h-17zM1484.7 1185.3h9v10h-9zM1563.6 1206.3h17v11h-17zM1541.6 1185.3h9v10h-9zM1620.4 1206.3h17v11h-17zM1598.4 1185.3h9v10h-9zM1655.3 1185.3h9v10h-9z" fill="#3a3835"/><use href="#mt" x="2019.6" y="1190.3"/><use href="#mt" x="113.8" y="1190.3"/><use href="#mt" x="170.7" y="1190.3"/><use href="#mt" x="227.6" y="1190.3"/><use href="#mt" x="284.4" y="1190.3"/><use href="#mt" x="341.3" y="1190.3"/><use href="#mt" x="398.2" y="1190.3"/><use href="#mt" x="455.1" y="1190.3"/><use href="#mt" x="512" y="1190.3"/><use href="#mt" x="568.9" y="1190.3"/><use href="#mt" x="625.8" y="1190.3"/><use href="#mt" x="682.7" y="1190.3"/><use href="#mt" x="739.6" y="1190.3"/><use href="#mt" x="796.4" y="1190.3"/><use href="#mt" x="853.3" y="1190.3"/><use href="#mt" x="910.2" y="1190.3"/><use href="#mt" x="1393.8" y="1190.3"/><use href="#mt" x="1450.7" y="1190.3"/><use href="#mt" x="1507.6" y="1190.3"/><use href="#mt" x="1564.4" y="1190.3"/><use href="#mt" x="1621.3" y="1190.3"/><use href="#mt" x="1678.2" y="1190.3"/><use href="#mt" x="1735.1" y="1190.3"/><path d="M2047.1 1263.2h17v11h-17zM141.3 1263.2h17v11h-17zM198.2 1263.2h17v11h-17zM176.2 1242.2h9v10h-9zM255.1 1263.2h17v11h-17zM233.1 1242.2h9v10h-9zM312 1263.2h17v11h-17zM290 1242.2h9v10h-9zM368.9 1263.2h17v11h-17zM346.9 1242.2h9v10h-9zM425.8 1263.2h17v11h-17zM403.8 1242.2h9v10h-9zM482.7 1263.2h17v11h-17zM460.7 1242.2h9v10h-9zM539.6 1263.2h17v11h-17zM517.6 1242.2h9v10h-9zM596.4 1263.2h17v11h-17zM574.4 1242.2h9v10h-9zM653.3 1263.2h17v11h-17zM631.3 1242.2h9v10h-9zM710.2 1263.2h17v11h-17zM688.2 1242.2h9v10h-9zM767.1 1263.2h17v11h-17zM745.1 1242.2h9v10h-9zM824 1263.2h17v11h-17zM802 1242.2h9v10h-9zM880.9 1263.2h17v11h-17zM858.9 1242.2h9v10h-9zM937.8 1263.2h17v11h-17zM915.8 1242.2h9v10h-9zM972.7 1242.2h9v10h-9zM1421.3 1263.2h17v11h-17zM1478.2 1263.2h17v11h-17zM1456.2 1242.2h9v10h-9zM1535.1 1263.2h17v11h-17zM1513.1 1242.2h9v10h-9zM1592 1263.2h17v11h-17zM1570 1242.2h9v10h-9zM1648.9 1263.2h17v11h-17zM1626.9 1242.2h9v10h-9zM1705.8 1263.2h17v11h-17zM1683.8 1242.2h9v10h-9zM1762.7 1263.2h17v11h-17zM1740.7 1242.2h9v10h-9zM1797.6 1242.2h9v10h-9z" fill="#3a3835"/><use href="#mt" x="1991.1" y="1247.2"/><use href="#mt" x="85.3" y="1247.2"/><use href="#mt" x="142.2" y="1247.2"/><use href="#mt" x="199.1" y="1247.2"/><use href="#mt" x="256" y="1247.2"/><use href="#mt" x="312.9" y="1247.2"/><use href="#mt" x="369.8" y="1247.2"/><use href="#mt" x="426.7" y="1247.2"/><use href="#mt" x="483.6" y="1247.2"/><use href="#mt" x="540.4" y="1247.2"/><use href="#mt" x="597.3" y="1247.2"/><use href="#mt" x="654.2" y="1247.2"/><use href="#mt" x="711.1" y="1247.2"/><use href="#mt" x="768" y="1247.2"/><use href="#mt" x="824.9" y="1247.2"/><use href="#mt" x="881.8" y="1247.2"/><use href="#mt" x="938.7" y="1247.2"/><use href="#mt" x="995.6" y="1247.2"/><use href="#mt" x="1365.3" y="1247.2"/><use href="#mt" x="1422.2" y="1247.2"/><use href="#mt" x="1479.1" y="1247.2"/><use href="#mt" x="1536" y="1247.2"/><use href="#mt" x="1592.9" y="1247.2"/><use href="#mt" x="1649.8" y="1247.2"/><use href="#mt" x="1706.7" y="1247.2"/><use href="#mt" x="1763.6" y="1247.2"/></g><rect x="1422.2" y="0" width="56.9" height="280" fill="url(#pwater)"/><rect x="967.1" y="0" width="56.9" height="280" fill="url(#pwater)"/><rect x="1419" y="0" width="5" height="595.4" fill="#6f9ff8"/><rect x="1194.7" y="49.4" width="56.9" height="146.9" fill="#efefef"/><rect x="1194.7" y="49.4" width="6" height="146.9" fill="#3c3c3c"/><rect x="1244.1" y="49.4" width="5" height="146.9" fill="#c9c9c9"/><rect x="1249.1" y="49.4" width="2.5" height="146.9" fill="#3c3c3c"/><rect x="1200.7" y="135" width="48.4" height="3" fill="#9a9a9a"/><rect x="1200.7" y="153" width="48.4" height="3" fill="#9a9a9a"/><rect x="1200.7" y="171" width="48.4" height="3" fill="#9a9a9a"/><rect x="1200.7" y="189" width="48.4" height="3" fill="#9a9a9a"/><path d="M424 682.6h3.6v3.8h-3.6zM420.4 686.2h3.6v3.8h-3.6zM406.2 689.7h7.1v3.8h-7.1zM438.2 689.7h3.6v3.8h-3.6zM402.6 693.3h3.6v3.8h-3.6zM434.6 693.3h3.6v3.8h-3.6zM399.1 696.8h3.6v3.8h-3.6zM424 696.8h3.6v3.8h-3.6zM399.1 700.4h3.6v3.8h-3.6zM420.4 700.4h3.6v3.8h-3.6zM395.5 703.9h3.6v3.8h-3.6zM445.3 703.9h3.6v3.8h-3.6zM392 707.5h3.6v3.8h-3.6zM413.3 707.5h3.6v3.8h-3.6zM434.6 707.5h3.6v3.8h-3.6zM388.4 711h3.6v3.8h-3.6zM406.2 711h3.6v3.8h-3.6zM427.5 711h3.6v3.8h-3.6zM388.4 714.6h3.6v3.8h-3.6zM406.2 714.6h3.6v3.8h-3.6zM427.5 714.6h3.6v3.8h-3.6zM406.2 718.2h3.6v3.8h-3.6zM427.5 718.2h3.6v3.8h-3.6z" fill="#a8e83e"/><path d="M427.5 682.6h3.6v3.8h-3.6zM424 686.2h10.7v3.8h-10.7zM416.8 689.7h21.3v3.8h-21.3zM441.7 689.7h7.1v3.8h-7.1zM406.2 693.3h10.7v3.8h-10.7zM420.4 693.3h14.2v3.8h-14.2zM438.2 693.3h10.7v3.8h-10.7zM402.6 696.8h17.8v3.8h-17.8zM427.5 696.8h3.6v3.8h-3.6zM434.6 696.8h17.8v3.8h-17.8zM402.6 700.4h17.8v3.8h-17.8zM424 700.4h10.7v3.8h-10.7zM438.2 700.4h14.2v3.8h-14.2zM399.1 703.9h3.6v3.8h-3.6zM406.2 703.9h32v3.8h-32zM441.7 703.9h3.6v3.8h-3.6zM448.8 703.9h7.1v3.8h-7.1zM395.5 707.5h10.7v3.8h-10.7zM416.8 707.5h3.6v3.8h-3.6zM424 707.5h10.7v3.8h-10.7zM438.2 707.5h3.6v3.8h-3.6zM445.3 707.5h10.7v3.8h-10.7zM392 711h14.2v3.8h-14.2zM409.7 711h14.2v3.8h-14.2zM431.1 711h14.2v3.8h-14.2zM448.8 711h10.7v3.8h-10.7zM392 714.6h14.2v3.8h-14.2zM409.7 714.6h17.8v3.8h-17.8zM431.1 714.6h17.8v3.8h-17.8zM452.4 714.6h7.1v3.8h-7.1zM392 718.2h14.2v3.8h-14.2zM409.7 718.2h17.8v3.8h-17.8zM431.1 718.2h17.8v3.8h-17.8zM409.7 721.7h14.2v3.8h-14.2zM431.1 721.7h14.2v3.8h-14.2z" fill="#66a029"/><path d="M431.1 682.6h3.6v3.8h-3.6zM434.6 686.2h3.6v3.8h-3.6zM413.3 689.7h3.6v3.8h-3.6zM448.8 689.7h3.6v3.8h-3.6zM416.8 693.3h3.6v3.8h-3.6zM448.8 693.3h3.6v3.8h-3.6zM420.4 696.8h3.6v3.8h-3.6zM431.1 696.8h3.6v3.8h-3.6zM452.4 696.8h3.6v3.8h-3.6zM434.6 700.4h3.6v3.8h-3.6zM452.4 700.4h3.6v3.8h-3.6zM402.6 703.9h3.6v3.8h-3.6zM438.2 703.9h3.6v3.8h-3.6zM456 703.9h3.6v3.8h-3.6zM406.2 707.5h3.6v3.8h-3.6zM420.4 707.5h3.6v3.8h-3.6zM441.7 707.5h3.6v3.8h-3.6zM456 707.5h3.6v3.8h-3.6zM424 711h3.6v3.8h-3.6zM445.3 711h3.6v3.8h-3.6zM459.5 711h3.6v3.8h-3.6zM448.8 714.6h3.6v3.8h-3.6zM459.5 714.6h3.6v3.8h-3.6zM448.8 718.2h3.6v3.8h-3.6zM456 718.2h3.6v3.8h-3.6zM402.6 721.7h3.6v3.8h-3.6zM424 721.7h3.6v3.8h-3.6zM445.3 721.7h3.6v3.8h-3.6zM420.4 725.3h3.6v3.8h-3.6zM441.7 725.3h3.6v3.8h-3.6z" fill="#140a00"/><path d="M409.7 707.5h3.6v3.8h-3.6zM395.5 721.7h7.1v3.8h-7.1zM448.8 721.7h7.1v3.8h-7.1zM413.3 725.3h7.1v3.8h-7.1zM434.6 725.3h7.1v3.8h-7.1z" fill="#7a4a10"/></svg><div id="bhd"></div><div class="abs" style="left:0;top:120px;width:16px;height:1160px;background:rgba(40,70,150,.16);border-right:1.500px solid rgba(40,60,120,.28)"></div><div class="abs" style="left:1.500px;top:130.500px;width:27px;height:27px;border-radius:50%;background:#8fa9e3;border:1.500px solid #7d94c9"></div><svg class="abs" style="left:11px;top:138px;" width="9" height="12" viewBox="0 0 9 12"><path d="M2 1.500L7 6l-5 4.500" fill="none" stroke="#2b3f6b" stroke-width="2" stroke-linecap="round" stroke-linejoin="round"/></svg><span class="t" style='left:44px;top:133.75px;font-size:19.5px;letter-spacing:-0.12px;font-weight:700;'>Lands of Ambustio</span><div class="bb" style="left:236px;width:30px"></div><svg class="abs" style="left:243px;top:135.5px;" width="17" height="16.2" viewBox="0 0 20 19"><path d="M10 1.800l2.500 5.300 5.700.700-4.200 4 1.100 5.700-5.100-2.800-5.100 2.800 1.100-5.700-4.200-4 5.700-.700z" fill="none" stroke="#172b4d" stroke-width="2" stroke-linejoin="round"/></svg><div class="abs" style="left:275px;top:134px;width:1.500px;height:20px;background:rgba(120,125,150,.45)"></div><div class="bb" style="left:285px;width:104px"></div><svg class="abs" style="left:294px;top:135.5px;" width="11.7" height="15" viewBox="0 0 14 18"><rect x="1.500" y="7.500" width="11" height="9" rx="2" fill="none" stroke="#172b4d" stroke-width="1.800"/><path d="M4 7.500V5a3 3 0 0 1 6 0v2.500" fill="none" stroke="#172b4d" stroke-width="1.800"/><circle cx="7" cy="12" r="1.300" fill="#172b4d"/></svg><span class="t" style='left:317px;top:134.2px;font-size:19px;letter-spacing:0.14px;'>Private</span><div class="abs" style="left:413px;top:128px;width:98px;height:32px;border-radius:5px;background:rgba(74,72,78,.88)"></div><svg class="abs" style="left:424px;top:137.5px;" width="17" height="12" viewBox="0 0 17 12"><rect x=".800" y="1" width="3.600" height="8.500" rx="1" fill="none" stroke="#fff" stroke-width="1.500"/><rect x="6.500" y="1" width="3.600" height="6" rx="1" fill="none" stroke="#fff" stroke-width="1.500"/><rect x="12.200" y="1" width="3.600" height="8.500" rx="1" fill="none" stroke="#fff" stroke-width="1.500"/></svg><span class="t" style='left:447px;top:134.2px;font-size:19px;letter-spacing:0.07px;color:#fff;'>Board</span><div class="bb" style="left:514px;width:33px"></div><svg class="abs" style="left:523px;top:140.5px;" width="14" height="8" viewBox="0 0 14 8"><path d="M1 1l6 6 l6 -6" fill="none" stroke="#172b4d" stroke-width="1.9" stroke-linecap="round" stroke-linejoin="round"/></svg><div class="bb" style="left:1438px;width:142px"></div><svg class="abs" style="left:1450px;top:135px;" width="18" height="18" viewBox="0 0 18 18"><path d="M16 2L2.500 7.500l5 2.500L9 15.500z" fill="none" stroke="#172b4d" stroke-width="1.800" stroke-linejoin="round"/><path d="M7.500 10l-1 4" stroke="#172b4d" stroke-width="1.800" stroke-linecap="round"/></svg><span class="t" style='left:1473px;top:134.2px;font-size:19px;letter-spacing:0.25px;'>Power-Ups</span><div class="bb" style="left:1586px;width:142px"></div><svg class="abs" style="left:1596px;top:135px;" width="14" height="18" viewBox="0 0 14 18"><path d="M9.500 1L2 10h4.500L4 17l8-9.500H7.500z" fill="#172b4d"/></svg><span class="t" style='left:1618px;top:134.2px;font-size:19px;letter-spacing:0.43px;'>Automation</span><div class="abs" style="left:1739px;top:134px;width:1.500px;height:20px;background:rgba(120,125,150,.45)"></div><div class="bb" style="left:1749px;width:89px"></div><svg class="abs" style="left:1763px;top:139.5px;" width="12" height="10" viewBox="0 0 12 10"><path d="M1 1h10M3 4.800h6M4.800 8.600h2.400" stroke="#172b4d" stroke-width="1.600" stroke-linecap="round"/></svg><span class="t" style='left:1785px;top:134.2px;font-size:19px;letter-spacing:0.35px;'>Filter</span><div class="abs" style="left:1851px;top:134px;width:1.500px;height:20px;background:rgba(120,125,150,.45)"></div><svg class="abs" style="left:1862.8px;top:129.3px;overflow:visible;" width="28.4" height="28.4" viewBox="0 0 32 32"><circle cx="16" cy="16" r="16" fill="#a9ead0"/><clipPath id="av1877"><circle cx="16" cy="16" r="16"/></clipPath><g clip-path="url(#av1877)"><path d="M8 14c-1-8 5-12 10-11 6 0 9 5 8 11l1 9-3 1-1-8-12-2-1 6-2-1z" fill="#9a6a3c"/><ellipse cx="17" cy="15.500" rx="6" ry="7" fill="#f3d3b4"/><path d="M10.500 12c2-4 8-5 12-2l1 3c-4-3-9-2-13 1z" fill="#7c5228"/><circle cx="14.500" cy="15" r="1" fill="#3a2a1a"/><circle cx="19.500" cy="15" r="1" fill="#3a2a1a"/><path d="M15 19.500q2 1.500 4 0" stroke="#b0503c" stroke-width="1" fill="none"/><path d="M9 32c0-6 3-9 8-9s8 3 8 9z" fill="#eef0f4"/><path d="M22 24l4 1 1 7h-5z" fill="#f0e27a"/><path d="M6 22l4 2v8H5z" fill="#f0e27a"/></g><path d="M22 26l4.500-3.500 4.500 3.500M22 30l4.500-3.500 4.500 3.500" fill="none" stroke="#fff" stroke-width="2.800" stroke-linejoin="round"/><path d="M22 26l4.500-3.500 4.500 3.500M22 30l4.500-3.500 4.500 3.500" fill="none" stroke="#5b7fc7" stroke-width="1.400" stroke-linejoin="round"/></svg><div class="abs" style="left:1899px;top:128px;width:90px;height:32px;border-radius:5px;background:#2878be"></div><svg class="abs" style="left:1910px;top:137px;" width="15" height="15" viewBox="0 0 17 17"><circle cx="6.500" cy="5.500" r="3" fill="none" stroke="#fff" stroke-width="1.700"/><path d="M1.500 15c0-3.500 2-5.500 5-5.500 1.500 0 2.700.500 3.500 1.300" fill="none" stroke="#fff" stroke-width="1.700" stroke-linecap="round"/><path d="M13 10v6M10 13h6" stroke="#fff" stroke-width="1.700" stroke-linecap="round"/></svg><span class="t" style='left:1928px;top:134.2px;font-size:19px;letter-spacing:-0.43px;color:#fff;'>Share</span><div class="bb" style="left:2008px;width:32px"></div><svg class="abs" style="left:2016px;top:141.5px;" width="16" height="5" viewBox="0 0 16 5"><circle cx="2.200" cy="2.500" r="1.700" fill="#172b4d"/><circle cx="8" cy="2.500" r="1.700" fill="#172b4d"/><circle cx="13.800" cy="2.500" r="1.700" fill="#172b4d"/></svg><div class="list" style="left:28px;height:1096px"></div><span class="t" style='left:44px;top:179px;font-size:18px;letter-spacing:0.31px;font-weight:700;'>Icebox</span><svg class="abs" style="left:272px;top:184px;" width="16" height="5" viewBox="0 0 16 5"><circle cx="2" cy="2.500" r="1.450" fill="#6b778c"/><circle cx="8" cy="2.500" r="1.450" fill="#6b778c"/><circle cx="14" cy="2.500" r="1.450" fill="#6b778c"/></svg><div class="abs" style="left:28px;top:208px;width:272px;height:1017.500px;overflow:hidden"><div class="abs" style="left:-28px;top:-208px;width:272px;height:1300px"><div class="card" style="left:36px;top:208px;height:320px"></div><svg class="abs" style="left:36px;top:208px;border-radius:4px 4px 0 0;opacity:.999" width="248" height="260" viewBox="0 0 248 260"><defs><pattern id="lava" width="28.500" height="26.400" patternUnits="userSpaceOnUse" x="51" y="-4"><rect width="28.500" height="26.400" fill="#d95a22"/><ellipse cx="8" cy="3.3" rx="4.6" ry="1.9" fill="none" stroke="#f5a02c" stroke-width="1.300"/><path d="M4.9 3.3h6.2" stroke="#f5a02c" stroke-width="1"/><path d="M18.9 3.3l2.6 -2.08l2.6 2.08l-2.6 2.08z" fill="none" stroke="#f5a02c" stroke-width="1.200"/><rect x="15" y="2.700" width="1.400" height="1.400" fill="#f5a02c"/><ellipse cx="22" cy="9.9" rx="4.6" ry="1.9" fill="none" stroke="#f5a02c" stroke-width="1.300"/><path d="M18.9 9.9h6.2" stroke="#f5a02c" stroke-width="1"/><path d="M5.4 9.9l2.6 -2.08l2.6 2.08l-2.6 2.08z" fill="none" stroke="#f5a02c" stroke-width="1.200"/><ellipse cx="6" cy="16.5" rx="3.8" ry="1.9" fill="none" stroke="#f5a02c" stroke-width="1.300"/><path d="M3.7 16.5h4.6" stroke="#f5a02c" stroke-width="1"/><path d="M16.1 15.8l2.4 -1.92l2.4 1.92l-2.4 1.92z" fill="none" stroke="#f5a02c" stroke-width="1.200"/><rect x="12.500" y="14" width="1.400" height="1.400" fill="#f5a02c"/><rect x="26" y="16.500" width="1.400" height="1.400" fill="#f5a02c"/><ellipse cx="22" cy="23.1" rx="4.6" ry="1.9" fill="none" stroke="#f5a02c" stroke-width="1.300"/><path d="M18.9 23.1h6.2" stroke="#f5a02c" stroke-width="1"/><path d="M6.2 23.1l2.8 -2.24l2.8 2.24l-2.8 2.24z" fill="none" stroke="#f5a02c" stroke-width="1.200"/><rect x="15.500" y="22.500" width="1.400" height="1.400" fill="#f5a02c"/></pattern><pattern id="cob" width="22.800" height="22.800" patternUnits="userSpaceOnUse" x="51" y="34"><rect width="22.800" height="22.800" fill="#59151a"/><path d="M0 0h4.28v1.43h-4.28zM7.12 0h5.7v1.43h-5.7zM15.68 0h4.28v1.43h-4.28zM21.38 0h1.43v1.43h-1.43zM0 1.43h5.7v1.43h-5.7zM7.12 1.43h7.12v1.43h-7.12zM15.68 1.43h5.7v1.43h-5.7zM1.43 2.85h2.85v1.43h-2.85zM8.55 2.85h4.28v1.43h-4.28zM17.1 2.85h2.85v1.43h-2.85zM2.85 4.28h5.7v1.43h-5.7zM12.83 4.28h5.7v1.43h-5.7zM19.95 4.28h2.85v1.43h-2.85zM0 5.7h1.43v1.43h-1.43zM2.85 5.7h7.12v1.43h-7.12zM11.4 5.7h7.12v1.43h-7.12zM19.95 5.7h2.85v1.43h-2.85zM0 7.12h1.43v1.43h-1.43zM4.28 7.12h4.28v1.43h-4.28zM12.83 7.12h4.28v1.43h-4.28zM21.38 7.12h1.43v1.43h-1.43zM0 8.55h2.85v1.43h-2.85zM8.55 8.55h4.28v1.43h-4.28zM17.1 8.55h4.28v1.43h-4.28zM0 9.97h4.28v1.43h-4.28zM5.7 9.97h8.55v1.43h-8.55zM15.68 9.97h5.7v1.43h-5.7zM1.43 11.4h2.85v1.43h-2.85zM5.7 11.4h7.12v1.43h-7.12zM15.68 11.4h4.28v1.43h-4.28zM5.7 12.83h2.85v1.43h-2.85zM12.83 12.83h2.85v1.43h-2.85zM19.95 12.83h2.85v1.43h-2.85zM0 14.25h4.28v1.43h-4.28zM8.55 14.25h8.55v1.43h-8.55zM18.53 14.25h4.28v1.43h-4.28zM0 15.68h5.7v1.43h-5.7zM7.12 15.68h8.55v1.43h-8.55zM18.53 15.68h4.28v1.43h-4.28zM1.43 17.1h2.85v1.43h-2.85zM8.55 17.1h4.28v1.43h-4.28zM17.1 17.1h1.43v1.43h-1.43zM19.95 17.1h1.43v1.43h-1.43zM4.28 18.53h4.28v1.43h-4.28zM12.83 18.53h5.7v1.43h-5.7zM0 19.95h1.43v1.43h-1.43zM2.85 19.95h7.12v1.43h-7.12zM11.4 19.95h8.55v1.43h-8.55zM21.38 19.95h1.43v1.43h-1.43zM0 21.38h1.43v1.43h-1.43zM4.28 21.38h4.28v1.43h-4.28zM12.83 21.38h5.7v1.43h-5.7zM21.38 21.38h1.43v1.43h-1.43z" fill="#741e24" shape-rendering="crispEdges"/></pattern></defs><rect width="248" height="260" fill="#4f171f"/><rect x="51" y="0" width="146.500" height="34" fill="url(#lava)"/><rect x="51" y="34" width="146.500" height="179" fill="url(#cob)"/><path d="M1 4l14 13M4 1l14 13M247 4l-14 13M244 1l-14 13" stroke="#8a5a60" stroke-width=".700" opacity=".700"/><path d="M51 160c8 3 13 10 17 18 8 4 14 12 13 20-2 6-10 9-18 9H51z" fill="#fff"/><path d="M51 198c10 2 22 1 29-4 1 8-6 13-17 13H51z" fill="#cfe0f6"/><path d="M55 172l6-2M57 182l7-2" stroke="#222" stroke-width="1.200"/><path d="M51 118h1.500v3H51zM51 138h1.500v3H51z" fill="#111"/><path d="M131.15 39h10.25v2.05h-10.25zM129.1 41.05h2.05v2.05h-2.05zM141.4 41.05h2.05v2.05h-2.05zM127.05 43.1h2.05v2.05h-2.05zM143.45 43.1h2.05v2.05h-2.05zM127.05 45.15h2.05v2.05h-2.05zM143.45 45.15h2.05v2.05h-2.05zM127.05 47.2h2.05v2.05h-2.05zM131.15 47.2h2.05v2.05h-2.05zM143.45 47.2h2.05v2.05h-2.05zM127.05 49.25h2.05v2.05h-2.05zM141.4 49.25h2.05v2.05h-2.05zM129.1 51.3h2.05v2.05h-2.05zM139.35 51.3h2.05v2.05h-2.05zM139.35 53.35h2.05v2.05h-2.05zM129.1 55.4h2.05v2.05h-2.05zM141.4 55.4h2.05v2.05h-2.05zM129.1 57.45h2.05v2.05h-2.05zM141.4 57.45h2.05v2.05h-2.05zM131.15 59.5h2.05v2.05h-2.05zM139.35 59.5h2.05v2.05h-2.05zM131.15 61.55h2.05v2.05h-2.05zM139.35 61.55h2.05v2.05h-2.05zM131.15 63.6h4.1v2.05h-4.1zM137.3 63.6h4.1v2.05h-4.1z" fill="#1a0d08" shape-rendering="crispEdges"/><path d="M131.15 41.05h10.25v2.05h-10.25zM129.1 43.1h14.35v2.05h-14.35zM133.2 45.15h10.25v2.05h-10.25zM135.25 47.2h8.2v2.05h-8.2zM135.25 49.25h6.15v2.05h-6.15zM135.25 51.3h4.1v2.05h-4.1z" fill="#c87a30" shape-rendering="crispEdges"/><path d="M129.1 45.15h4.1v2.05h-4.1zM129.1 47.2h2.05v2.05h-2.05zM133.2 47.2h2.05v2.05h-2.05zM129.1 49.25h6.15v2.05h-6.15zM131.15 51.3h4.1v2.05h-4.1zM133.2 55.4h2.05v2.05h-2.05zM133.2 57.45h2.05v2.05h-2.05z" fill="#f3d2b0" shape-rendering="crispEdges"/><path d="M131.15 53.35h8.2v2.05h-8.2zM131.15 55.4h2.05v2.05h-2.05zM135.25 55.4h6.15v2.05h-6.15zM131.15 57.45h2.05v2.05h-2.05zM135.25 57.45h6.15v2.05h-6.15zM133.2 59.5h6.15v2.05h-6.15zM133.2 61.55h2.05v2.05h-2.05zM137.3 61.55h2.05v2.05h-2.05z" fill="#1f50d8" shape-rendering="crispEdges"/><ellipse cx="149" cy="68" rx="10" ry="6.500" fill="#fdfbe8"/><path d="M144 72l2 8 5-6z" fill="#fdfbe8"/><circle cx="144.500" cy="68" r="1.300" fill="#8a7a3a"/><circle cx="149" cy="68" r="1.300" fill="#8a7a3a"/><circle cx="153.500" cy="68" r="1.300" fill="#8a7a3a"/><path d="M132.1 82h12.3v2.05h-12.3zM130.05 84.05h2.05v2.05h-2.05zM144.4 84.05h2.05v2.05h-2.05zM130.05 86.1h2.05v2.05h-2.05zM146.45 86.1h2.05v2.05h-2.05zM130.05 88.15h2.05v2.05h-2.05zM134.15 88.15h4.1v2.05h-4.1zM146.45 88.15h2.05v2.05h-2.05zM130.05 90.2h2.05v2.05h-2.05zM138.25 90.2h2.05v2.05h-2.05zM144.4 90.2h2.05v2.05h-2.05zM130.05 92.25h2.05v2.05h-2.05zM138.25 92.25h2.05v2.05h-2.05zM144.4 92.25h2.05v2.05h-2.05zM130.05 94.3h2.05v2.05h-2.05zM140.3 94.3h2.05v2.05h-2.05zM146.45 94.3h2.05v2.05h-2.05zM130.05 96.35h2.05v2.05h-2.05zM140.3 96.35h4.1v2.05h-4.1zM146.45 96.35h2.05v2.05h-2.05zM130.05 98.4h2.05v2.05h-2.05zM142.35 98.4h6.15v2.05h-6.15zM130.05 100.45h2.05v2.05h-2.05zM142.35 100.45h2.05v2.05h-2.05zM146.45 100.45h4.1v2.05h-4.1zM130.05 102.5h2.05v2.05h-2.05zM142.35 102.5h2.05v2.05h-2.05zM146.45 102.5h4.1v2.05h-4.1zM132.1 104.55h2.05v2.05h-2.05zM140.3 104.55h2.05v2.05h-2.05zM132.1 106.6h10.25v2.05h-10.25z" fill="#1a0d08" shape-rendering="crispEdges"/><path d="M132.1 84.05h12.3v2.05h-12.3zM132.1 86.1h14.35v2.05h-14.35zM132.1 88.15h2.05v2.05h-2.05zM140.3 88.15h6.15v2.05h-6.15zM140.3 90.2h4.1v2.05h-4.1zM140.3 92.25h4.1v2.05h-4.1zM132.1 94.3h8.2v2.05h-8.2zM142.35 94.3h4.1v2.05h-4.1zM132.1 96.35h8.2v2.05h-8.2zM144.4 96.35h2.05v2.05h-2.05zM132.1 98.4h4.1v2.05h-4.1zM138.25 98.4h4.1v2.05h-4.1zM132.1 100.45h4.1v2.05h-4.1zM138.25 100.45h4.1v2.05h-4.1zM144.4 100.45h2.05v2.05h-2.05zM132.1 102.5h10.25v2.05h-10.25zM134.15 104.55h6.15v2.05h-6.15z" fill="#f1d230" shape-rendering="crispEdges"/><path d="M138.25 88.15h2.05v2.05h-2.05zM132.1 90.2h6.15v2.05h-6.15zM132.1 92.25h6.15v2.05h-6.15zM136.2 98.4h2.05v2.05h-2.05zM136.2 100.45h2.05v2.05h-2.05z" fill="#7a4a1c" shape-rendering="crispEdges"/><path d="M132.15 124h10.25v2.05h-10.25zM130.1 126.05h2.05v2.05h-2.05zM142.4 126.05h2.05v2.05h-2.05zM128.05 128.1h4.1v2.05h-4.1zM142.4 128.1h4.1v2.05h-4.1zM126 130.15h22.55v2.05h-22.55zM130.1 132.2h2.05v2.05h-2.05zM142.4 132.2h2.05v2.05h-2.05zM130.1 134.25h2.05v2.05h-2.05zM134.2 134.25h2.05v2.05h-2.05zM142.4 134.25h2.05v2.05h-2.05zM130.1 136.3h2.05v2.05h-2.05zM140.35 136.3h2.05v2.05h-2.05zM130.1 138.35h2.05v2.05h-2.05zM140.35 138.35h2.05v2.05h-2.05zM128.05 140.4h2.05v2.05h-2.05zM142.4 140.4h2.05v2.05h-2.05zM128.05 142.45h2.05v2.05h-2.05zM142.4 142.45h2.05v2.05h-2.05zM130.1 144.5h2.05v2.05h-2.05zM140.35 144.5h2.05v2.05h-2.05zM130.1 146.55h2.05v2.05h-2.05zM134.2 146.55h2.05v2.05h-2.05zM140.35 146.55h2.05v2.05h-2.05zM130.1 148.6h6.15v2.05h-6.15zM138.3 148.6h4.1v2.05h-4.1z" fill="#1a0d08" shape-rendering="crispEdges"/><path d="M132.15 126.05h2.05v2.05h-2.05zM136.25 126.05h2.05v2.05h-2.05zM140.35 126.05h2.05v2.05h-2.05zM132.15 128.1h10.25v2.05h-10.25zM132.15 138.35h4.1v2.05h-4.1zM138.3 138.35h2.05v2.05h-2.05zM130.1 140.4h2.05v2.05h-2.05zM134.2 140.4h8.2v2.05h-8.2zM130.1 142.45h2.05v2.05h-2.05zM134.2 142.45h6.15v2.05h-6.15zM132.15 144.5h4.1v2.05h-4.1zM138.3 144.5h2.05v2.05h-2.05zM132.15 146.55h2.05v2.05h-2.05zM138.3 146.55h2.05v2.05h-2.05z" fill="#e5541c" shape-rendering="crispEdges"/><path d="M134.2 126.05h2.05v2.05h-2.05zM138.3 126.05h2.05v2.05h-2.05zM136.25 138.35h2.05v2.05h-2.05zM132.15 142.45h2.05v2.05h-2.05zM136.25 144.5h2.05v2.05h-2.05z" fill="#f6a233" shape-rendering="crispEdges"/><path d="M132.15 132.2h4.1v2.05h-4.1zM132.15 134.25h2.05v2.05h-2.05zM136.25 134.25h2.05v2.05h-2.05zM132.15 136.3h6.15v2.05h-6.15zM132.15 140.4h2.05v2.05h-2.05zM140.35 142.45h2.05v2.05h-2.05z" fill="#f3d2b0" shape-rendering="crispEdges"/><path d="M136.25 132.2h6.15v2.05h-6.15zM138.3 134.25h4.1v2.05h-4.1zM138.3 136.3h2.05v2.05h-2.05z" fill="#9b5a2a" shape-rendering="crispEdges"/><circle cx="148.500" cy="155.500" r="4.200" fill="#56602c"/><circle cx="147.500" cy="154.500" r="1.800" fill="#8f9a58"/><circle cx="137.500" cy="162" r="3.200" fill="#4c7a2c"/><circle cx="136.800" cy="161.300" r="1.300" fill="#9cc46a"/><path d="M129.1 168h8.2v2.05h-8.2zM127.05 170.05h2.05v2.05h-2.05zM137.3 170.05h8.2v2.05h-8.2zM125 172.1h2.05v2.05h-2.05zM145.5 172.1h2.05v2.05h-2.05zM125 174.15h4.1v2.05h-4.1zM147.55 174.15h2.05v2.05h-2.05zM127.05 176.2h2.05v2.05h-2.05zM141.4 176.2h2.05v2.05h-2.05zM147.55 176.2h2.05v2.05h-2.05zM129.1 178.25h2.05v2.05h-2.05zM141.4 178.25h6.15v2.05h-6.15zM129.1 180.3h2.05v2.05h-2.05zM133.2 180.3h2.05v2.05h-2.05zM139.35 180.3h2.05v2.05h-2.05zM129.1 182.35h2.05v2.05h-2.05zM137.3 182.35h2.05v2.05h-2.05zM129.1 184.4h2.05v2.05h-2.05zM139.35 184.4h2.05v2.05h-2.05zM127.05 186.45h2.05v2.05h-2.05zM141.4 186.45h2.05v2.05h-2.05zM129.1 188.5h2.05v2.05h-2.05zM139.35 188.5h2.05v2.05h-2.05zM129.1 190.55h2.05v2.05h-2.05zM133.2 190.55h2.05v2.05h-2.05zM139.35 190.55h2.05v2.05h-2.05zM129.1 192.6h6.15v2.05h-6.15zM137.3 192.6h4.1v2.05h-4.1z" fill="#10200c" shape-rendering="crispEdges"/><path d="M129.1 170.05h8.2v2.05h-8.2zM127.05 172.1h18.45v2.05h-18.45zM129.1 174.15h18.45v2.05h-18.45zM129.1 176.2h12.3v2.05h-12.3zM143.45 176.2h4.1v2.05h-4.1zM139.35 178.25h2.05v2.05h-2.05zM131.15 184.4h8.2v2.05h-8.2zM129.1 186.45h2.05v2.05h-2.05zM133.2 186.45h6.15v2.05h-6.15zM131.15 188.5h8.2v2.05h-8.2zM131.15 190.55h2.05v2.05h-2.05zM137.3 190.55h2.05v2.05h-2.05z" fill="#4cc258" shape-rendering="crispEdges"/><path d="M131.15 178.25h4.1v2.05h-4.1zM131.15 180.3h2.05v2.05h-2.05zM135.25 180.3h2.05v2.05h-2.05zM131.15 182.35h6.15v2.05h-6.15zM131.15 186.45h2.05v2.05h-2.05zM139.35 186.45h2.05v2.05h-2.05z" fill="#f3d2b0" shape-rendering="crispEdges"/><path d="M135.25 178.25h4.1v2.05h-4.1zM137.3 180.3h2.05v2.05h-2.05z" fill="#6a3d18" shape-rendering="crispEdges"/><rect x="51" y="212" width="146.500" height="48" fill="#000"/><rect x="51" y="217" width="146.500" height="2.800" fill="#fff"/><text x="51" y="241" font-family="DejaVu Sans Mono,monospace" font-size="16" fill="#84a9f5" textLength="13" lengthAdjust="spacingAndGlyphs" >HP</text><text x="102.5" y="241" font-family="DejaVu Sans Mono,monospace" font-size="16" fill="#fff" textLength="65.5" lengthAdjust="spacingAndGlyphs" >585/ 585</text><text x="176.5" y="241" font-family="DejaVu Sans Mono,monospace" font-size="16" fill="#84a9f5" textLength="16.5" lengthAdjust="spacingAndGlyphs" >MP</text><rect x="51" y="240" width="117" height="2.600" fill="#e8923a"/><rect x="176.500" y="241" width="21" height="2.600" fill="#3f86d8"/><text x="51" y="261.5" font-family="DejaVu Sans Mono,monospace" font-size="16" fill="#84a9f5" textLength="13" lengthAdjust="spacingAndGlyphs" >HP</text><text x="102.5" y="261.5" font-family="DejaVu Sans Mono,monospace" font-size="16" fill="#fff" textLength="65.5" lengthAdjust="spacingAndGlyphs" >360/ 360</text><text x="176.5" y="261.5" font-family="DejaVu Sans Mono,monospace" font-size="16" fill="#84a9f5" textLength="16.5" lengthAdjust="spacingAndGlyphs" >MP</text></svg><span class="t" style='left:44px;top:474.5px;font-size:18px;letter-spacing:0.81px;'>Custom Skills Animation</span><svg class="abs" style="left:45px;top:500px;" width="17.5" height="18.5" viewBox="0 0 15 16"><g transform="rotate(45 7.500 8)"><path d="M10 4.500v6.500a2.500 2.500 0 0 1-5 0V4a1.600 1.600 0 0 1 3.200 0v6.500" fill="none" stroke="#6b778c" stroke-width="1.400" stroke-linecap="round"/><path d="M5 4.500V11" stroke="#6b778c" stroke-width="1.400" stroke-linecap="round"/></g></svg><span class="t" style='left:65.5px;top:500.5px;font-size:18px;color:#5e6c84;'>1</span><div class="card" style="left:36px;top:536px;height:31.5px"></div><span class="t" style='left:44px;top:542.5px;font-size:18px;letter-spacing:0.80px;'>Make some Accessories</span><div class="card" style="left:36px;top:576px;height:120px"></div><span class="t" style='left:44px;top:582.5px;font-size:18px;letter-spacing:0.80px;'>Display weapon sprite</span><span class="t" style='left:44px;top:602.5px;font-size:18px;letter-spacing:0.88px;'>whenever one of the</span><span class="t" style='left:44px;top:622.5px;font-size:18px;letter-spacing:0.93px;'>characters in the group</span><span class="t" style='left:44px;top:642.5px;font-size:18px;letter-spacing:0.68px;'>uses a skill</span><svg class="abs" style="left:46px;top:670px;" width="16" height="12" viewBox="0 0 16 12"><path d="M.500 1h14.500M.500 4.300h14.500M.500 7.600h14.500M.500 10.900h9.500" stroke="#6b778c" stroke-width="1.300"/></svg><div class="card" style="left:36px;top:704px;height:213px"></div><svg class="abs" style="left:36px;top:704px;border-radius:4px 4px 0 0;opacity:.999" width="248" height="132.5" viewBox="0 0 248 132.5"><defs><linearGradient id="arch" x1="0" y1="0" x2="0" y2="1"><stop offset="0" stop-color="#b9ded6"/><stop offset=".500" stop-color="#d3dddc"/><stop offset="1" stop-color="#bfc4c4"/></linearGradient><linearGradient id="keep" x1="0" y1="0" x2="1" y2="0"><stop offset="0" stop-color="#9a948c"/><stop offset=".200" stop-color="#b9b2a8"/><stop offset="1" stop-color="#c9c3ba"/></linearGradient><linearGradient id="wall" x1="0" y1="0" x2="0" y2="1"><stop offset="0" stop-color="#6f675f"/><stop offset="1" stop-color="#554e49"/></linearGradient><filter id="bl2"><feGaussianBlur stdDeviation=".600"/></filter></defs><rect width="248" height="132.500" fill="#aaa69e"/><g filter="url(#bl2)"><rect x="53" y="0" width="150" height="60" fill="url(#keep)"/><rect x="53" y="0" width="20" height="50" fill="#8f8982"/><rect x="122" y="0" width="12" height="30" fill="#a8a198"/><rect x="164" y="0" width="10" height="24" fill="#aaa39a"/><rect x="192" y="0" width="13" height="20" fill="#b4aea6"/><path d="M88 4h3v3h-3zM99 6h3v3h-3zM110 6h3v3h-3zM88 15h3v3h-3zM99 16h3v3h-3zM110 16h3v3h-3z" fill="#55607a"/><rect x="148" y="11" width="8" height="14" fill="#8c7f4c"/><path d="M96 0h5v5l-2.500 2-2.500-2zM107 1h5v5l-2.500 2-2.500-2zM140 5h4v5l-2 2-2-2zM156 7h4v5l-2 2-2-2z" fill="#d8d8de" stroke="#8a8aa0" stroke-width=".500"/><path d="M205 0h43v9l-43 7z" fill="#cfdcdb"/><rect x="0" y="0" width="13" height="50" fill="#b2b7b6"/><rect x="4" y="0" width="3" height="40" fill="#9fb0b4"/><path d="M12 9h42v60H12z" fill="#6d6761"/><path d="M16 12h20v55H16z" fill="#5d5751"/><path d="M36 10h18v55H36z" fill="#7b756e"/><path d="M12 6h42v4H12z" fill="#9d978e"/><path d="M143 28l105-18v122.500H150z" fill="url(#wall)"/><path d="M143 28l105-18v5l-105 18z" fill="#9a9388"/><path d="M205.500 132.500V62c0-17 6-29 14-29s14 12 14 29v70.500z" fill="url(#arch)"/><path d="M211 132.500V86l14-30 8 20v56.500z" fill="#c9cdcc" opacity=".850"/><path d="M205.500 132.500V62c0-17 6-29 14-29l-3 4c-5 4-7 14-7 25v70.500z" fill="#8a8279"/><path d="M244.500 132.500V60c0-10 1.500-17 3.500-21v93.500z" fill="#cfdad8"/><path d="M193 25l7.500-1.300v8.500l-3.700 3.300-3.800-2.500zM232.500 19.500l7.500-1.300v8.500l-3.700 3.300-3.800-2.500z" fill="#c6c6cc" stroke="#85858f" stroke-width=".600"/><path d="M0 44l12-4 10 6 12-8 14 10 8 22v62.500H0z" fill="#6b6964"/><path d="M0 50l10-2 8 14-4 20-14 14z" fill="#b9bcb2"/><path d="M24 48l8-6 10 16-2 18-12 8-6-14z" fill="#a9aba2"/><path d="M22 74l14-8 10 10-8 28-14 10-6-18z" fill="#d0d3c8"/><path d="M0 98l16-6 10 22-8 18.500H0z" fill="#c4c7bc"/><path d="M34 104l14-16 8 14-6 30.500H30z" fill="#b4b6ad"/><path d="M6 64l8 2 4 14-8 10-10 2v-16z" fill="#55524e"/><path d="M40 60l12 4 2 20-8 6z" fill="#57534f"/><path d="M12 110l14-8 6 10-6 20.500h-12z" fill="#4f4c49"/><path d="M52 112l30-4 60 6 50-6 56 10v14.500H48z" fill="#6e6e6a"/><path d="M70 116l30-4 24 8-10 12.500H66z" fill="#a4a69e"/><path d="M128 114l34-2 30 10 10 10.500h-70z" fill="#858781"/><path d="M160 118l40-8 48 8v14.500h-70z" fill="#9a9c95"/><path d="M196 120l30-2 22 6v8.500h-44z" fill="#7b7d78"/></g><rect x="53.500" y="28" width="137.500" height="82" fill="#000"/><path d="M62.500 33.500h120.500l3 3v65.500l-3 3H62.500l-3-3V36.500z" fill="#0f50e8" stroke="#fff" stroke-width="2.200"/><rect x="63.700" y="59.300" width="117.500" height="20.700" fill="#84d0d8"/><text x="67" y="55.5" font-family="DejaVu Sans Mono,monospace" font-size="16" fill="#fff" textLength="64" lengthAdjust="spacingAndGlyphs" stroke="#1a2a55" stroke-width="2" paint-order="stroke" stroke-linejoin="round">New Game</text><text x="67" y="76" font-family="DejaVu Sans Mono,monospace" font-size="16" fill="#fff" textLength="64" lengthAdjust="spacingAndGlyphs" stroke="#55696c" stroke-width="2" paint-order="stroke" stroke-linejoin="round">Continue</text><text x="67" y="96.5" font-family="DejaVu Sans Mono,monospace" font-size="16" fill="#fff" textLength="55.5" lengthAdjust="spacingAndGlyphs" stroke="#1a2a55" stroke-width="2" paint-order="stroke" stroke-linejoin="round">Options</text></svg><div class="abs" style="left:44px;top:846.5px;width:40px;height:8.500px;border-radius:4.500px;background:#e37b63"></div><div class="abs" style="left:45.7px;top:847.85px;width:5.800px;height:5.800px;border-radius:50%;background:#7d3a2c"></div><div class="abs" style="left:61.1px;top:847.85px;width:5.800px;height:5.800px;border-radius:50%;background:#7d3a2c"></div><div class="abs" style="left:76.5px;top:847.85px;width:5.800px;height:5.800px;border-radius:50%;background:#7d3a2c"></div><span class="t" style='left:44px;top:863.5px;font-size:18px;letter-spacing:0.98px;'>Add 'quit game' option</span><svg class="abs" style="left:46px;top:892px;" width="16" height="12" viewBox="0 0 16 12"><path d="M.500 1h14.500M.500 4.300h14.500M.500 7.600h14.500M.500 10.900h9.500" stroke="#6b778c" stroke-width="1.300"/></svg><svg class="abs" style="left:73.5px;top:888.5px;" width="17.5" height="18.5" viewBox="0 0 15 16"><g transform="rotate(45 7.500 8)"><path d="M10 4.500v6.500a2.500 2.500 0 0 1-5 0V4a1.600 1.600 0 0 1 3.200 0v6.500" fill="none" stroke="#6b778c" stroke-width="1.400" stroke-linecap="round"/><path d="M5 4.500V11" stroke="#6b778c" stroke-width="1.400" stroke-linecap="round"/></g></svg><span class="t" style='left:93.5px;top:889px;font-size:18px;color:#5e6c84;'>1</span><div class="card" style="left:36px;top:925px;height:281px"></div><svg class="abs" style="left:36px;top:925px;border-radius:4px 4px 0 0;opacity:.999" width="248" height="181.5" viewBox="0 0 248 181.5"><defs><pattern id="msand" width="22" height="22" patternUnits="userSpaceOnUse" x="14" y="-5"><rect width="22" height="22" fill="#fdee93"/><path d="M2 3h1.500v1.500H2zM9 1h1v1H9zM16 4h1.500v1H16zM5 9h1v1H5zM12 8h1.500v1.500H12zM19 11h1v1h-1zM3 15h1.500v1H3zM10 17h1v1h-1zM16 16h1.500v1.500H16zM7 20h1v1H7z" fill="#e6cf4a"/></pattern><pattern id="mwat" width="22" height="22" patternUnits="userSpaceOnUse" x="14" y="-5"><rect width="22" height="22" fill="#6097f2"/><path d="M3 2h1.500v1.500H3zM10 4h1v1h-1zM17 3h1v1.500h-1zM6 9h1v1H6zM13 10h1.500v1.500H13zM19 8h1v1h-1zM2 15h1.500v1H2zM9 16h1v1.500H9zM16 17h1.500v1.500H16zM5 20h1v1H5z" fill="#a9c4f8"/></pattern><pattern id="moc" width="22" height="22" patternUnits="userSpaceOnUse" x="-8" y="-5"><rect width="22" height="22" fill="#6097f2"/><path d="M0 4h4l2 3h5l2-3h4l2 4h3M3 7l-2 5 3 4-2 6M11 7l1 6 5 2 1 7M18 8l3 5M4 16h6l2 4M0 12h1" fill="none" stroke="#9dbbf7" stroke-width="1.100"/></pattern><pattern id="mwh" width="22" height="22" patternUnits="userSpaceOnUse" x="14" y="-5"><rect width="22" height="22" fill="#fdee93"/><rect y="9" width="22" height="12" fill="#f5a332"/><path d="M1 10h1.500v10H1zM5 11h2v9H5zM10 10h1.500v10H10zM14 12h2v8h-2zM19 10h1.500v10H19z" fill="#ecd548"/><path d="M3 6h1.500v3H3zM8 7h1v2H8zM12 5h1.500v4H12zM17 7h1v2h-1z" fill="#f5a332"/><rect y="21" width="22" height="1" fill="#f3b9a0"/></pattern></defs><rect width="248" height="181.500" fill="#77b38a"/><path d="M0 0H14V61H36V171H0z" fill="url(#moc)"/><path d="M36 124l5 7h-5zM36 154l5-7h-5z" fill="url(#moc)"/><path d="M14 0H189.500V83H167.500V105H36V61H14z" fill="url(#msand)"/><rect x="36" y="83" width="131.500" height="22" fill="url(#mwh)"/><rect x="167.500" y="61" width="22" height="22" fill="url(#mwh)"/><path d="M36 127H190V105H212V66q0-5 5-5H248V83H234V122q0 5-5 5H212V149H248V171H195q-5 0-5-5V149H36z" fill="url(#mwat)"/><path d="M104 181.500V122l4-5 4-3.500 4 3.500 4 5v59.500z" fill="#f9d8a2"/><rect x="102" y="39" width="22" height="22" fill="#f6c5b4"/><path d="M103 60V50c0-5 4-7 10-7s10 2 10 7v10z" fill="#fff" stroke="#111" stroke-width="1.600"/><path d="M103 58V50c0-4 3-6 7-6.500-3 3-3 9-1 14.500z" fill="#111"/><rect x="114" y="53" width="4.500" height="7" fill="#111"/><path d="M107 45.500h10" stroke="#111" stroke-width="1.200"/><rect x="91.500" y="18" width="41.500" height="18.500" fill="#fff" stroke="#222" stroke-width="1.300"/><text x="112.200" y="25.8" text-anchor="middle" font-family="DejaVu Sans Mono,monospace" font-weight="700" font-size="7.400" fill="#222" textLength="22" lengthAdjust="spacingAndGlyphs">SERF</text><text x="112.200" y="33.8" text-anchor="middle" font-family="DejaVu Sans Mono,monospace" font-weight="700" font-size="7.400" fill="#222" textLength="36" lengthAdjust="spacingAndGlyphs">VILLAGE</text><rect x="91.500" y="129" width="41.500" height="18.500" fill="#fff" stroke="#222" stroke-width="1.300"/><text x="112.200" y="136.8" text-anchor="middle" font-family="DejaVu Sans Mono,monospace" font-weight="700" font-size="7.400" fill="#222" textLength="31" lengthAdjust="spacingAndGlyphs">FOREST</text><text x="112.200" y="144.8" text-anchor="middle" font-family="DejaVu Sans Mono,monospace" font-weight="700" font-size="7.400" fill="#222" textLength="36" lengthAdjust="spacingAndGlyphs">DUNGEON</text><rect x="102" y="149" width="22" height="22" fill="#b9b9b9"/><path d="M104.500 169V158q0-4 4-4h9q4 0 4 4v11" fill="#d2d2d2" stroke="#222" stroke-width="1.600"/><rect x="109.500" y="162" width="6.500" height="7.500" fill="#2a1208"/><rect x="0" y="17.500" width="14" height="22" fill="#b9b9b9"/><path d="M0 36V26q0-3.500 4-3.500h3q4 0 4 3.500v10" fill="#d2d2d2" stroke="#222" stroke-width="1.600"/><rect x="0" y="30" width="6" height="6.500" fill="#2a1208"/><path d="M86.65 61h7.75v1.55h-7.75zM85.1 62.55h1.55v1.55h-1.55zM94.4 62.55h1.55v1.55h-1.55zM83.55 64.1h1.55v1.55h-1.55zM95.95 64.1h1.55v1.55h-1.55zM83.55 65.65h1.55v1.55h-1.55zM95.95 65.65h1.55v1.55h-1.55zM83.55 67.2h1.55v1.55h-1.55zM94.4 67.2h1.55v1.55h-1.55zM83.55 68.75h1.55v1.55h-1.55zM94.4 68.75h1.55v1.55h-1.55zM85.1 70.3h1.55v1.55h-1.55zM92.85 70.3h1.55v1.55h-1.55z" fill="#b4604a" shape-rendering="crispEdges"/><path d="M86.65 62.55h7.75v1.55h-7.75zM85.1 64.1h10.85v1.55h-10.85zM85.1 65.65h1.55v1.55h-1.55zM88.2 65.65h7.75v1.55h-7.75zM88.2 67.2h6.2v1.55h-6.2zM89.75 68.75h4.65v1.55h-4.65zM91.3 70.3h1.55v1.55h-1.55z" fill="#d97a5e" shape-rendering="crispEdges"/><path d="M86.65 65.65h1.55v1.55h-1.55z" fill="#f2d04a" shape-rendering="crispEdges"/><path d="M85.1 67.2h3.1v1.55h-3.1zM85.1 68.75h1.55v1.55h-1.55zM88.2 68.75h1.55v1.55h-1.55zM86.65 70.3h4.65v1.55h-4.65z" fill="#f6dcc0" shape-rendering="crispEdges"/><path d="M86.65 68.75h1.55v1.55h-1.55z" fill="#3a3a6a" shape-rendering="crispEdges"/><path d="M86.65 71.85h6.2v1.55h-6.2zM85.1 73.4h9.3v1.55h-9.3zM85.1 74.95h3.1v1.55h-3.1zM91.3 74.95h3.1v1.55h-3.1zM86.65 76.5h6.2v1.55h-6.2zM86.65 78.05h3.1v1.55h-3.1zM91.3 78.05h3.1v1.55h-3.1z" fill="#c9b58c" shape-rendering="crispEdges"/><path d="M88.2 74.95h3.1v1.55h-3.1z" fill="#efe4c6" shape-rendering="crispEdges"/><path d="M109.1 62h9.3v1.55h-9.3zM107.55 63.55h1.55v1.55h-1.55zM118.4 63.55h1.55v1.55h-1.55zM107.55 65.1h1.55v1.55h-1.55zM119.95 65.1h1.55v1.55h-1.55zM107.55 66.65h1.55v1.55h-1.55zM110.65 66.65h3.1v1.55h-3.1zM119.95 66.65h1.55v1.55h-1.55zM107.55 68.2h1.55v1.55h-1.55zM113.75 68.2h1.55v1.55h-1.55zM118.4 68.2h1.55v1.55h-1.55zM107.55 69.75h1.55v1.55h-1.55zM113.75 69.75h1.55v1.55h-1.55zM118.4 69.75h1.55v1.55h-1.55zM107.55 71.3h1.55v1.55h-1.55zM115.3 71.3h1.55v1.55h-1.55zM119.95 71.3h1.55v1.55h-1.55zM107.55 72.85h1.55v1.55h-1.55zM115.3 72.85h3.1v1.55h-3.1zM119.95 72.85h1.55v1.55h-1.55zM107.55 74.4h1.55v1.55h-1.55zM116.85 74.4h4.65v1.55h-4.65zM107.55 75.95h1.55v1.55h-1.55zM116.85 75.95h1.55v1.55h-1.55zM119.95 75.95h3.1v1.55h-3.1zM107.55 77.5h1.55v1.55h-1.55zM116.85 77.5h1.55v1.55h-1.55zM119.95 77.5h3.1v1.55h-3.1zM109.1 79.05h1.55v1.55h-1.55zM115.3 79.05h1.55v1.55h-1.55zM109.1 80.6h7.75v1.55h-7.75z" fill="#1a0d08" shape-rendering="crispEdges"/><path d="M109.1 63.55h9.3v1.55h-9.3zM109.1 65.1h10.85v1.55h-10.85zM109.1 66.65h1.55v1.55h-1.55zM115.3 66.65h4.65v1.55h-4.65zM115.3 68.2h3.1v1.55h-3.1zM115.3 69.75h3.1v1.55h-3.1zM109.1 71.3h6.2v1.55h-6.2zM116.85 71.3h3.1v1.55h-3.1zM109.1 72.85h6.2v1.55h-6.2zM118.4 72.85h1.55v1.55h-1.55zM109.1 74.4h3.1v1.55h-3.1zM113.75 74.4h3.1v1.55h-3.1zM109.1 75.95h3.1v1.55h-3.1zM113.75 75.95h3.1v1.55h-3.1zM118.4 75.95h1.55v1.55h-1.55zM109.1 77.5h7.75v1.55h-7.75zM110.65 79.05h4.65v1.55h-4.65z" fill="#f1d230" shape-rendering="crispEdges"/><path d="M113.75 66.65h1.55v1.55h-1.55zM109.1 68.2h4.65v1.55h-4.65zM109.1 69.75h4.65v1.55h-4.65zM112.2 74.4h1.55v1.55h-1.55zM112.2 75.95h1.55v1.55h-1.55z" fill="#7a4a1c" shape-rendering="crispEdges"/><path d="M131.15 62h7.75v1.55h-7.75zM129.6 63.55h1.55v1.55h-1.55zM138.9 63.55h1.55v1.55h-1.55zM128.05 65.1h3.1v1.55h-3.1zM138.9 65.1h3.1v1.55h-3.1zM126.5 66.65h17.05v1.55h-17.05zM129.6 68.2h1.55v1.55h-1.55zM138.9 68.2h1.55v1.55h-1.55zM129.6 69.75h1.55v1.55h-1.55zM132.7 69.75h1.55v1.55h-1.55zM138.9 69.75h1.55v1.55h-1.55zM129.6 71.3h1.55v1.55h-1.55zM137.35 71.3h1.55v1.55h-1.55zM129.6 72.85h1.55v1.55h-1.55zM137.35 72.85h1.55v1.55h-1.55zM128.05 74.4h1.55v1.55h-1.55zM138.9 74.4h1.55v1.55h-1.55zM128.05 75.95h1.55v1.55h-1.55zM138.9 75.95h1.55v1.55h-1.55zM129.6 77.5h1.55v1.55h-1.55zM137.35 77.5h1.55v1.55h-1.55zM129.6 79.05h1.55v1.55h-1.55zM132.7 79.05h1.55v1.55h-1.55zM137.35 79.05h1.55v1.55h-1.55zM129.6 80.6h4.65v1.55h-4.65zM135.8 80.6h3.1v1.55h-3.1z" fill="#1a0d08" shape-rendering="crispEdges"/><path d="M131.15 63.55h1.55v1.55h-1.55zM134.25 63.55h1.55v1.55h-1.55zM137.35 63.55h1.55v1.55h-1.55zM131.15 65.1h7.75v1.55h-7.75zM131.15 72.85h3.1v1.55h-3.1zM135.8 72.85h1.55v1.55h-1.55zM129.6 74.4h1.55v1.55h-1.55zM132.7 74.4h6.2v1.55h-6.2zM129.6 75.95h1.55v1.55h-1.55zM132.7 75.95h4.65v1.55h-4.65zM131.15 77.5h3.1v1.55h-3.1zM135.8 77.5h1.55v1.55h-1.55zM131.15 79.05h1.55v1.55h-1.55zM135.8 79.05h1.55v1.55h-1.55z" fill="#e5541c" shape-rendering="crispEdges"/><path d="M132.7 63.55h1.55v1.55h-1.55zM135.8 63.55h1.55v1.55h-1.55zM134.25 72.85h1.55v1.55h-1.55zM131.15 75.95h1.55v1.55h-1.55zM134.25 77.5h1.55v1.55h-1.55z" fill="#f6a233" shape-rendering="crispEdges"/><path d="M131.15 68.2h3.1v1.55h-3.1zM131.15 69.75h1.55v1.55h-1.55zM134.25 69.75h1.55v1.55h-1.55zM131.15 71.3h4.65v1.55h-4.65zM131.15 74.4h1.55v1.55h-1.55zM137.35 75.95h1.55v1.55h-1.55z" fill="#f3d2b0" shape-rendering="crispEdges"/><path d="M134.25 68.2h4.65v1.55h-4.65zM135.8 69.75h3.1v1.55h-3.1zM135.8 71.3h1.55v1.55h-1.55z" fill="#9b5a2a" shape-rendering="crispEdges"/><path d="M150.1 61.5h6.2v1.55h-6.2zM148.55 63.05h1.55v1.55h-1.55zM156.3 63.05h6.2v1.55h-6.2zM147 64.6h1.55v1.55h-1.55zM162.5 64.6h1.55v1.55h-1.55zM147 66.15h3.1v1.55h-3.1zM164.05 66.15h1.55v1.55h-1.55zM148.55 67.7h1.55v1.55h-1.55zM159.4 67.7h1.55v1.55h-1.55zM164.05 67.7h1.55v1.55h-1.55zM150.1 69.25h1.55v1.55h-1.55zM159.4 69.25h4.65v1.55h-4.65zM150.1 70.8h1.55v1.55h-1.55zM153.2 70.8h1.55v1.55h-1.55zM157.85 70.8h1.55v1.55h-1.55zM150.1 72.35h1.55v1.55h-1.55zM156.3 72.35h1.55v1.55h-1.55zM150.1 73.9h1.55v1.55h-1.55zM157.85 73.9h1.55v1.55h-1.55zM148.55 75.45h1.55v1.55h-1.55zM159.4 75.45h1.55v1.55h-1.55zM150.1 77h1.55v1.55h-1.55zM157.85 77h1.55v1.55h-1.55zM150.1 78.55h1.55v1.55h-1.55zM153.2 78.55h1.55v1.55h-1.55zM157.85 78.55h1.55v1.55h-1.55zM150.1 80.1h4.65v1.55h-4.65zM156.3 80.1h3.1v1.55h-3.1z" fill="#10200c" shape-rendering="crispEdges"/><path d="M150.1 63.05h6.2v1.55h-6.2zM148.55 64.6h13.95v1.55h-13.95zM150.1 66.15h13.95v1.55h-13.95zM150.1 67.7h9.3v1.55h-9.3zM160.95 67.7h3.1v1.55h-3.1zM157.85 69.25h1.55v1.55h-1.55zM151.65 73.9h6.2v1.55h-6.2zM150.1 75.45h1.55v1.55h-1.55zM153.2 75.45h4.65v1.55h-4.65zM151.65 77h6.2v1.55h-6.2zM151.65 78.55h1.55v1.55h-1.55zM156.3 78.55h1.55v1.55h-1.55z" fill="#4cc258" shape-rendering="crispEdges"/><path d="M151.65 69.25h3.1v1.55h-3.1zM151.65 70.8h1.55v1.55h-1.55zM154.75 70.8h1.55v1.55h-1.55zM151.65 72.35h4.65v1.55h-4.65zM151.65 75.45h1.55v1.55h-1.55zM157.85 75.45h1.55v1.55h-1.55z" fill="#f3d2b0" shape-rendering="crispEdges"/><path d="M154.75 69.25h3.1v1.55h-3.1zM156.3 70.8h1.55v1.55h-1.55z" fill="#6a3d18" shape-rendering="crispEdges"/></svg><div class="abs" style="left:44px;top:1116.5px;width:40px;height:8.500px;border-radius:4.500px;background:#e37b63"></div><div class="abs" style="left:45.7px;top:1117.85px;width:5.800px;height:5.800px;border-radius:50%;background:#7d3a2c"></div><div class="abs" style="left:61.1px;top:1117.85px;width:5.800px;height:5.800px;border-radius:50%;background:#7d3a2c"></div><div class="abs" style="left:76.5px;top:1117.85px;width:5.800px;height:5.800px;border-radius:50%;background:#7d3a2c"></div><span class="t" style='left:44px;top:1133.5px;font-size:18px;letter-spacing:0.90px;'>Overworld - Bush</span><span class="t" style='left:44px;top:1153.5px;font-size:18px;letter-spacing:0.86px;'>transparency</span><svg class="abs" style="left:45px;top:1179px;" width="17.5" height="18.5" viewBox="0 0 15 16"><g transform="rotate(45 7.500 8)"><path d="M10 4.500v6.500a2.500 2.500 0 0 1-5 0V4a1.600 1.600 0 0 1 3.200 0v6.500" fill="none" stroke="#6b778c" stroke-width="1.400" stroke-linecap="round"/><path d="M5 4.500V11" stroke="#6b778c" stroke-width="1.400" stroke-linecap="round"/></g></svg><span class="t" style='left:65.5px;top:1179.5px;font-size:18px;color:#5e6c84;'>1</span><div class="card" style="left:36px;top:1215px;height:60px"></div><span class="t" style='left:44px;top:1221.5px;font-size:18px;letter-spacing:0.81px;'>[Overworld] Ghost town</span></div></div><div class="abs" style="left:288px;top:208px;width:8px;height:1014px;border-radius:4px;background:#dcdfe6"></div><div class="abs" style="left:288px;top:208px;width:8px;height:502px;border-radius:4px;background:#c1c5d0"></div><svg class="abs" style="left:48px;top:1234.5px;" width="13" height="13" viewBox="0 0 13 13"><path d="M6.5 0.500v12M0.500 6.5h12" stroke="#5e6c84" stroke-width="1.700" stroke-linecap="round"/></svg><span class="t" style='left:67px;top:1232.5px;font-size:18px;letter-spacing:0.60px;color:#5e6c84;'>Add a card</span><svg class="abs" style="left:269.5px;top:1232.5px;" width="15" height="14" viewBox="0 0 15 14"><path d="M3.500 1.200h8" stroke="#6b778c" stroke-width="1.600" stroke-dasharray="2.200 1.400"/><path d="M1.800 3.500v6" stroke="#6b778c" stroke-width="1.600" stroke-dasharray="2.200 1.400"/><rect x="4" y="3.800" width="9.800" height="9" rx="1.800" fill="none" stroke="#6b778c" stroke-width="1.700"/><rect x="5" y="9" width="8" height="3" fill="#6b778c"/></svg><div class="list" style="left:308px;height:77px"></div><span class="t" style='left:324px;top:179px;font-size:18px;letter-spacing:0.41px;font-weight:700;'>Backlog</span><svg class="abs" style="left:552px;top:184px;" width="16" height="5" viewBox="0 0 16 5"><circle cx="2" cy="2.500" r="1.450" fill="#6b778c"/><circle cx="8" cy="2.500" r="1.450" fill="#6b778c"/><circle cx="14" cy="2.500" r="1.450" fill="#6b778c"/></svg><svg class="abs" style="left:328px;top:216.5px;" width="13" height="13" viewBox="0 0 13 13"><path d="M6.5 0.500v12M0.500 6.5h12" stroke="#5e6c84" stroke-width="1.700" stroke-linecap="round"/></svg><span class="t" style='left:347px;top:214.5px;font-size:18px;letter-spacing:0.60px;color:#5e6c84;'>Add a card</span><svg class="abs" style="left:549.5px;top:214.5px;" width="15" height="14" viewBox="0 0 15 14"><path d="M3.500 1.200h8" stroke="#6b778c" stroke-width="1.600" stroke-dasharray="2.200 1.400"/><path d="M1.800 3.500v6" stroke="#6b778c" stroke-width="1.600" stroke-dasharray="2.200 1.400"/><rect x="4" y="3.800" width="9.800" height="9" rx="1.800" fill="none" stroke="#6b778c" stroke-width="1.700"/><rect x="5" y="9" width="8" height="3" fill="#6b778c"/></svg><div class="list" style="left:588px;height:119px"></div><span class="t" style='left:604px;top:179px;font-size:18px;letter-spacing:0.38px;font-weight:700;'>Doing</span><svg class="abs" style="left:832px;top:184px;" width="16" height="5" viewBox="0 0 16 5"><circle cx="2" cy="2.500" r="1.450" fill="#6b778c"/><circle cx="8" cy="2.500" r="1.450" fill="#6b778c"/><circle cx="14" cy="2.500" r="1.450" fill="#6b778c"/></svg><div class="card" style="left:596px;top:208px;height:32px;width:256px"></div><span class="t" style='left:604px;top:214.5px;font-size:18px;letter-spacing:0.89px;'>Playtesting</span><svg class="abs" style="left:608px;top:256.5px;" width="13" height="13" viewBox="0 0 13 13"><path d="M6.5 0.500v12M0.500 6.5h12" stroke="#5e6c84" stroke-width="1.700" stroke-linecap="round"/></svg><span class="t" style='left:627px;top:254.5px;font-size:18px;letter-spacing:0.60px;color:#5e6c84;'>Add a card</span><svg class="abs" style="left:829.5px;top:254.5px;" width="15" height="14" viewBox="0 0 15 14"><path d="M3.500 1.200h8" stroke="#6b778c" stroke-width="1.600" stroke-dasharray="2.200 1.400"/><path d="M1.800 3.500v6" stroke="#6b778c" stroke-width="1.600" stroke-dasharray="2.200 1.400"/><rect x="4" y="3.800" width="9.800" height="9" rx="1.800" fill="none" stroke="#6b778c" stroke-width="1.700"/><rect x="5" y="9" width="8" height="3" fill="#6b778c"/></svg><div class="list" style="left:868px;height:77px"></div><span class="t" style='left:884px;top:179px;font-size:18px;letter-spacing:0.70px;font-weight:700;'>Waiting</span><svg class="abs" style="left:1112px;top:184px;" width="16" height="5" viewBox="0 0 16 5"><circle cx="2" cy="2.500" r="1.450" fill="#6b778c"/><circle cx="8" cy="2.500" r="1.450" fill="#6b778c"/><circle cx="14" cy="2.500" r="1.450" fill="#6b778c"/></svg><svg class="abs" style="left:888px;top:216.5px;" width="13" height="13" viewBox="0 0 13 13"><path d="M6.5 0.500v12M0.500 6.5h12" stroke="#5e6c84" stroke-width="1.700" stroke-linecap="round"/></svg><span class="t" style='left:907px;top:214.5px;font-size:18px;letter-spacing:0.60px;color:#5e6c84;'>Add a card</span><svg class="abs" style="left:1109.5px;top:214.5px;" width="15" height="14" viewBox="0 0 15 14"><path d="M3.500 1.200h8" stroke="#6b778c" stroke-width="1.600" stroke-dasharray="2.200 1.400"/><path d="M1.800 3.500v6" stroke="#6b778c" stroke-width="1.600" stroke-dasharray="2.200 1.400"/><rect x="4" y="3.800" width="9.800" height="9" rx="1.800" fill="none" stroke="#6b778c" stroke-width="1.700"/><rect x="5" y="9" width="8" height="3" fill="#6b778c"/></svg><div class="list" style="left:1148px;height:1096px"></div><div class="abs" style="left:1164.5px;top:176.500px;width:22.500px;height:22.500px;border-radius:4px;background:linear-gradient(#5dbb40,#3f9e2b);box-shadow:inset 0 0 0 1px #3f922c"></div><span class="t" style='left:1166.2px;top:178px;font-size:21px;font-weight:700;color:#fff;font-family:"DejaVu Sans",sans-serif;'>✔</span><span class="t" style='left:1195px;top:179.2px;font-size:18px;letter-spacing:0.33px;font-weight:700;'>Done</span><svg class="abs" style="left:1392px;top:184px;" width="16" height="5" viewBox="0 0 16 5"><circle cx="2" cy="2.500" r="1.450" fill="#6b778c"/><circle cx="8" cy="2.500" r="1.450" fill="#6b778c"/><circle cx="14" cy="2.500" r="1.450" fill="#6b778c"/></svg><div class="abs" style="left:1148px;top:208px;width:272px;height:1017.500px;overflow:hidden"><div class="abs" style="left:-1148px;top:-208px;width:272px;height:1300px"><div class="card" style="left:1156px;top:208px;height:32px"></div><span class="t" style='left:1164px;top:214.5px;font-size:18px;letter-spacing:0.56px;'>Win Build</span><div class="card" style="left:1156px;top:248px;height:32px"></div><span class="t" style='left:1164px;top:254.5px;font-size:18px;letter-spacing:0.62px;'>Mac Build</span><div class="card" style="left:1156px;top:288px;height:32px"></div><span class="t" style='left:1164px;top:294.5px;font-size:18px;letter-spacing:0.60px;'>Web Build</span><div class="card" style="left:1156px;top:328px;height:52px"></div><span class="t" style='left:1164px;top:334.5px;font-size:18px;letter-spacing:0.61px;'>Check JS TODOs /</span><span class="t" style='left:1164px;top:354.5px;font-size:18px;letter-spacing:0.67px;'>Remove unused plugins</span><div class="card" style="left:1156px;top:388px;height:52px"></div><span class="t" style='left:1164px;top:394.5px;font-size:18px;letter-spacing:0.51px;'>Remove all remaining RTP</span><span class="t" style='left:1164px;top:414.5px;font-size:18px;letter-spacing:0.59px;'>assets</span><div class="card" style="left:1156px;top:448px;height:59px"></div><span class="t" style='left:1164px;top:454.5px;font-size:18px;letter-spacing:0.82px;'>Icon</span><svg class="abs" style="left:1167px;top:482.5px;" width="16" height="14" viewBox="0 0 16 14"><path d="M4.500 1h7.500a3.300 3.300 0 0 1 0 6.600H7l-3.500 3.500V7.300A3.200 3.200 0 0 1 4.500 1z" fill="none" stroke="#6b778c" stroke-width="1.500" stroke-linejoin="round"/></svg><span class="t" style='left:1185.5px;top:480.5px;font-size:18px;color:#5e6c84;'>1</span><div class="card" style="left:1156px;top:516px;height:51.5px"></div><span class="t" style='left:1164px;top:522.5px;font-size:18px;letter-spacing:0.83px;'>Increases the distance</span><span class="t" style='left:1164px;top:542.5px;font-size:18px;letter-spacing:0.95px;'>between party members</span><div class="card" style="left:1156px;top:576px;height:59px"></div><span class="t" style='left:1164px;top:582.5px;font-size:18px;letter-spacing:0.79px;'>Refine cutscenes</span><svg class="abs" style="left:1166px;top:612px;" width="16" height="12" viewBox="0 0 16 12"><path d="M.500 1h14.500M.500 4.300h14.500M.500 7.600h14.500M.500 10.900h9.500" stroke="#6b778c" stroke-width="1.300"/></svg><div class="abs" style="left:1190px;top:606.500px;width:60px;height:23.500px;border-radius:4px;background:#61bd4f"></div><svg class="abs" style="left:1195px;top:610px;" width="15" height="15" viewBox="0 0 15 15"><path d="M12.500 7.500v4a1.500 1.500 0 0 1-1.500 1.500H3.500A1.500 1.500 0 0 1 2 11.500V4a1.500 1.500 0 0 1 1.500-1.500h6" fill="none" stroke="#fff" stroke-width="1.600" stroke-linecap="round"/><path d="M5 6.500l2.500 2.500 5.500-6" fill="none" stroke="#fff" stroke-width="1.700" stroke-linecap="round" stroke-linejoin="round"/></svg><span class="t" style='left:1214.5px;top:609.3px;font-size:18px;letter-spacing:1.23px;color:#fff;'>3/3</span><div class="card" style="left:1156px;top:644px;height:121px"></div><svg class="abs" style="left:1156px;top:644px;border-radius:4px 4px 0 0;opacity:.999" width="248" height="61" viewBox="0 0 248 61"><defs></defs><rect width="248" height="61" fill="#000"/><text x="40" y="45.500" font-family="Liberation Serif,serif" font-style="italic" font-weight="700" font-size="52" fill="#000" stroke="#fff" stroke-width="1.900" textLength="170" lengthAdjust="spacingAndGlyphs">Loading...</text></svg><span class="t" style='left:1164px;top:711.5px;font-size:18px;letter-spacing:0.89px;'>Loading gfx</span><svg class="abs" style="left:1165px;top:737px;" width="17.5" height="18.5" viewBox="0 0 15 16"><g transform="rotate(45 7.500 8)"><path d="M10 4.500v6.500a2.500 2.500 0 0 1-5 0V4a1.600 1.600 0 0 1 3.200 0v6.500" fill="none" stroke="#6b778c" stroke-width="1.400" stroke-linecap="round"/><path d="M5 4.500V11" stroke="#6b778c" stroke-width="1.400" stroke-linecap="round"/></g></svg><span class="t" style='left:1185.5px;top:737.5px;font-size:18px;color:#5e6c84;'>1</span><div class="card" style="left:1156px;top:773px;height:304px"></div><svg class="abs" style="left:1156px;top:773px;border-radius:4px 4px 0 0;opacity:.999" width="248" height="244" viewBox="0 0 248 244"><defs></defs><rect width="248" height="244" fill="#000"/><rect x="0" y="0" width="3.500" height="140" fill="#3a3a3a"/><path d="M1 2v136" stroke="#777" stroke-width="1.500" stroke-dasharray="2 2"/><rect x="8.500" y="6.500" width="213" height="207.500" rx="5" fill="none" stroke="#fff" stroke-width="1.500"/><rect x="230.500" y="6.500" width="60" height="207.500" rx="5" fill="none" stroke="#fff" stroke-width="1.500"/><text x="31" y="98.5" font-family="DejaVu Sans Mono,monospace" font-size="14" fill="#fff" textLength="74" lengthAdjust="spacingAndGlyphs" >Peasant Hat</text><text x="181.5" y="98.5" font-family="DejaVu Sans Mono,monospace" font-size="14" fill="#fff" textLength="6" lengthAdjust="spacingAndGlyphs" >x</text><rect x="195" y="84" width="20" height="18" fill="#9ce8d0"/><text x="205" y="98.5" font-family="DejaVu Sans Mono,monospace" font-size="14" fill="#fff" textLength="5.5" lengthAdjust="spacingAndGlyphs" >1</text><text x="184.5" y="134" font-family="DejaVu Sans Mono,monospace" font-size="14" fill="#fff" textLength="19.5" lengthAdjust="spacingAndGlyphs" >299</text><text x="207.5" y="134" font-family="DejaVu Sans Mono,monospace" font-size="14" fill="#84a9f5" textLength="7" lengthAdjust="spacingAndGlyphs" >G</text><rect x="30" y="155" width="22.5" height="21.500" rx="4.500" fill="#fff"/><path d="M35 160h12.500l-6.250 5zM35 165.500h12.500l-6.250 6.500z" fill="#2f8ef0" stroke="#1a6fd0" stroke-width=".800"/><rect x="61" y="155" width="23" height="21.500" rx="4.500" fill="#fff"/><path d="M66 162.500h13l-6.500 7z" fill="#2f8ef0" stroke="#1a6fd0" stroke-width=".800"/><rect x="92" y="155" width="22.5" height="21.500" rx="4.500" fill="#fff"/><path d="M97 169.500h13l-6.500-7.500z" fill="#2f8ef0" stroke="#1a6fd0" stroke-width=".800"/><rect x="123" y="155" width="23" height="21.500" rx="4.500" fill="#fff"/><path d="M128 165h13l-6.500-5.500zM128 172h13l-6.500-6.500z" fill="#2f8ef0" stroke="#1a6fd0" stroke-width=".800"/><rect x="154.5" y="155" width="45.5" height="21.500" rx="4.500" fill="#fff"/><path d="M169 165.500l7 5.500 9-10.500" fill="none" stroke="#f09a20" stroke-width="3.600" stroke-linejoin="miter"/><text x="237.5" y="24.5" font-family="DejaVu Sans Mono,monospace" font-size="13" fill="#84a9f5" textLength="12" lengthAdjust="spacingAndGlyphs" >Po</text><text x="237.5" y="60" font-family="DejaVu Sans Mono,monospace" font-size="13" fill="#9a9a9a" textLength="12" lengthAdjust="spacingAndGlyphs" >OK</text><text x="237.5" y="102" font-family="DejaVu Sans Mono,monospace" font-size="13" fill="#fff" textLength="12" lengthAdjust="spacingAndGlyphs" >Yu</text><text x="237.5" y="145" font-family="DejaVu Sans Mono,monospace" font-size="13" fill="#fff" textLength="12" lengthAdjust="spacingAndGlyphs" >Yo</text><text x="237.5" y="187" font-family="DejaVu Sans Mono,monospace" font-size="13" fill="#fff" textLength="12" lengthAdjust="spacingAndGlyphs" >Th</text></svg><span class="t" style='left:1164px;top:1023.5px;font-size:18px;letter-spacing:0.99px;'>ButtonSet</span><svg class="abs" style="left:1165px;top:1049px;" width="17.5" height="18.5" viewBox="0 0 15 16"><g transform="rotate(45 7.500 8)"><path d="M10 4.500v6.500a2.500 2.500 0 0 1-5 0V4a1.600 1.600 0 0 1 3.200 0v6.500" fill="none" stroke="#6b778c" stroke-width="1.400" stroke-linecap="round"/><path d="M5 4.500V11" stroke="#6b778c" stroke-width="1.400" stroke-linecap="round"/></g></svg><span class="t" style='left:1185.5px;top:1049.5px;font-size:18px;color:#5e6c84;'>1</span><div class="card" style="left:1156px;top:1085px;height:32px"></div><span class="t" style='left:1164px;top:1091.5px;font-size:18px;letter-spacing:0.62px;'>Splash Screen</span><div class="card" style="left:1156px;top:1125px;height:32px"></div><span class="t" style='left:1164px;top:1131.5px;font-size:18px;letter-spacing:0.81px;'>Prettier game over screen</span><div class="card" style="left:1156px;top:1165px;height:120px"></div><svg class="abs" style="left:1156px;top:1165px;border-radius:4px 4px 0 0;opacity:.999" width="248" height="62" viewBox="0 0 248 62"><defs></defs><rect width="248" height="62" fill="#000"/><rect x="0" y="51" width="75" height="11" fill="#77b38a"/><path d="M-4 62l9-10 3 1.500 5 8.500z" fill="#a8a3ae"/><path d="M5 52l3 1.500 5 8.500h-4z" fill="#55524f"/><path d="M1.5 55l3-3 1.500.700v3z" fill="#eee"/><path d="M10.5 62l9-10 3 1.500 5 8.500z" fill="#a8a3ae"/><path d="M19.5 52l3 1.500 5 8.500h-4z" fill="#55524f"/><path d="M16 55l3-3 1.500.700v3z" fill="#eee"/><path d="M25 62l9-10 3 1.500 5 8.500z" fill="#a8a3ae"/><path d="M34 52l3 1.500 5 8.500h-4z" fill="#55524f"/><path d="M30.5 55l3-3 1.500.700v3z" fill="#eee"/><path d="M39.5 62l9-10 3 1.500 5 8.500z" fill="#a8a3ae"/><path d="M48.5 52l3 1.500 5 8.500h-4z" fill="#55524f"/><path d="M45 55l3-3 1.500.700v3z" fill="#eee"/><path d="M54 62l9-10 3 1.500 5 8.500z" fill="#a8a3ae"/><path d="M63 52l3 1.500 5 8.500h-4z" fill="#55524f"/><path d="M59.5 55l3-3 1.500.700v3z" fill="#eee"/><path d="M-2 -8H66.500q4 0 4 4V43.500q0 4-4 4H5q-4 0-4-4z" fill="#000" stroke="#fff" stroke-width="1.500"/><rect x="77" y="0" width="1.800" height="62" fill="#e8e8e8"/><text x="5.7" y="8.4" font-family="DejaVu Sans Mono,monospace" font-size="9" fill="#fff" textLength="27" lengthAdjust="spacingAndGlyphs" >Status</text><text x="5.7" y="20" font-family="DejaVu Sans Mono,monospace" font-size="9" fill="#fff" textLength="31.5" lengthAdjust="spacingAndGlyphs" >Options</text><text x="5.7" y="31.2" font-family="DejaVu Sans Mono,monospace" font-size="9" fill="#fff" textLength="17.5" lengthAdjust="spacingAndGlyphs" >Save</text><text x="5.7" y="42.7" font-family="DejaVu Sans Mono,monospace" font-size="9" fill="#fff" textLength="36" lengthAdjust="spacingAndGlyphs" >Game End</text><text x="133" y="27" font-family="DejaVu Sans Mono,monospace" font-size="9" fill="#fff" textLength="22" lengthAdjust="spacingAndGlyphs" >Yunas</text><text x="133" y="38.3" font-family="DejaVu Sans Mono,monospace" font-size="9" fill="#84a9f5" textLength="8.5" lengthAdjust="spacingAndGlyphs" >Lv</text><text x="167" y="38.3" font-family="DejaVu Sans Mono,monospace" font-size="9" fill="#fff" textLength="4.5" lengthAdjust="spacingAndGlyphs" >6</text><text x="190.5" y="38.3" font-family="DejaVu Sans Mono,monospace" font-size="9" fill="#84a9f5" textLength="8.5" lengthAdjust="spacingAndGlyphs" >HP</text><text x="223.5" y="38.3" font-family="DejaVu Sans Mono,monospace" font-size="9" fill="#fff" textLength="12.5" lengthAdjust="spacingAndGlyphs" >68/</text><text x="246" y="38.3" font-family="DejaVu Sans Mono,monospace" font-size="9" fill="#fff" textLength="4.5" lengthAdjust="spacingAndGlyphs" >6</text><rect x="190.500" y="38.200" width="58" height="1.800" fill="#e8923a"/><text x="190.5" y="49.7" font-family="DejaVu Sans Mono,monospace" font-size="9" fill="#84a9f5" textLength="8.5" lengthAdjust="spacingAndGlyphs" >MP</text><text x="223.5" y="49.7" font-family="DejaVu Sans Mono,monospace" font-size="9" fill="#fff" textLength="12.5" lengthAdjust="spacingAndGlyphs" >68/</text><text x="246" y="49.7" font-family="DejaVu Sans Mono,monospace" font-size="9" fill="#fff" textLength="4.5" lengthAdjust="spacingAndGlyphs" >6</text><rect x="190.500" y="50" width="58" height="1.800" fill="#3f86d8"/><rect x="190.500" y="2.700" width="58" height="1.600" fill="#3f86d8"/><text x="190.5" y="2.5" font-family="DejaVu Sans Mono,monospace" font-size="9" fill="#84a9f5" textLength="8.5" lengthAdjust="spacingAndGlyphs" >MP</text><text x="223.5" y="2.5" font-family="DejaVu Sans Mono,monospace" font-size="9" fill="#ccc" textLength="12.5" lengthAdjust="spacingAndGlyphs" >17/</text><path d="M100 27.5h6.3v2.1h-6.3zM102.1 29.6h6.3v2.1h-6.3zM104.2 31.7h2.1v2.1h-2.1zM100 33.8h4.2v2.1h-4.2zM106.3 33.8h2.1v2.1h-2.1zM100 35.9h8.4v2.1h-8.4zM102.1 38h4.2v2.1h-4.2z" fill="#f1d230" shape-rendering="crispEdges"/><path d="M100 29.6h2.1v2.1h-2.1zM100 31.7h4.2v2.1h-4.2zM104.2 33.8h2.1v2.1h-2.1z" fill="#7a4a1c" shape-rendering="crispEdges"/></svg></div></div><div class="abs" style="left:1408px;top:208px;width:8px;height:1014px;border-radius:4px;background:#dcdfe6"></div><div class="abs" style="left:1408px;top:208px;width:8px;height:192px;border-radius:4px;background:#c1c5d0"></div><svg class="abs" style="left:1168px;top:1234.5px;" width="13" height="13" viewBox="0 0 13 13"><path d="M6.5 0.500v12M0.500 6.5h12" stroke="#5e6c84" stroke-width="1.700" stroke-linecap="round"/></svg><span class="t" style='left:1187px;top:1232.5px;font-size:18px;letter-spacing:0.60px;color:#5e6c84;'>Add a card</span><svg class="abs" style="left:1389.5px;top:1232.5px;" width="15" height="14" viewBox="0 0 15 14"><path d="M3.500 1.200h8" stroke="#6b778c" stroke-width="1.600" stroke-dasharray="2.200 1.400"/><path d="M1.800 3.500v6" stroke="#6b778c" stroke-width="1.600" stroke-dasharray="2.200 1.400"/><rect x="4" y="3.800" width="9.800" height="9" rx="1.800" fill="none" stroke="#6b778c" stroke-width="1.700"/><rect x="5" y="9" width="8" height="3" fill="#6b778c"/></svg><div class="abs" style="left:1428px;top:168px;width:272px;height:40px;border-radius:6px;background:rgba(255,255,255,.24)"></div><svg class="abs" style="left:1443px;top:180.5px;" width="13" height="13" viewBox="0 0 13 13"><path d="M6.5 0.500v12M0.500 6.5h12" stroke="#172b4d" stroke-width="1.700" stroke-linecap="round"/></svg><span class="t" style='left:1462px;top:178.5px;font-size:18px;letter-spacing:0.96px;'>Add another list</span><div id="saf"><div class="tl" style="left:26px;background:#ee6a5e;box-shadow:inset 0 0 0 1px #d9574c"></div><div class="tl" style="left:66px;background:#f5bf4f;box-shadow:inset 0 0 0 1px #d9a13b"></div><div class="tl" style="left:106px;background:#61c554;box-shadow:inset 0 0 0 1px #4ea942"></div><div class="sb" style="left:155.5px;width:50.5px"></div><div class="sb" style="left:208px;width:50px"></div><svg class="abs" style="left:170px;top:24px;" width="22" height="28" viewBox="0 0 22 28"><path d="M17 2L4 14l13 12" fill="none" stroke="#3f3f3f" stroke-width="3.2" stroke-linecap="round" stroke-linejoin="round"/></svg><svg class="abs" style="left:222px;top:24px;" width="22" height="28" viewBox="0 0 22 28"><path d="M5 2l13 12L5 26" fill="none" stroke="#a9a9a9" stroke-width="3.2" stroke-linecap="round" stroke-linejoin="round"/></svg><div class="sb" style="left:278px;width:106px"></div><div class="abs" style="left:346.5px;top:16px;width:1px;height:44px;background:#dcdcdc"></div><svg class="abs" style="left:297px;top:25px;" width="32" height="26" viewBox="0 0 32 26"><rect x="1.5" y="1.5" width="28" height="22" rx="2.5" fill="none" stroke="#444" stroke-width="2.4"/><path d="M11.5 2v22" stroke="#444" stroke-width="2.4"/><path d="M4.5 7h4M4.5 11h4M4.5 15h4" stroke="#444" stroke-width="1.6"/></svg><svg class="abs" style="left:355px;top:32px;" width="16" height="11" viewBox="0 0 16 11"><path d="M2 2l6 6 6-6" fill="none" stroke="#3c3c3c" stroke-width="3" stroke-linecap="round" stroke-linejoin="round"/></svg><div class="sb" style="left:418px;width:74px"></div><div class="sb" style="left:508px;width:74px"></div><div class="sb" style="left:598px;width:74px"></div><svg class="abs" style="left:438px;top:21px;" width="34" height="34" viewBox="0 0 34 34"><circle cx="17" cy="17" r="15" fill="none" stroke="#9a5db5" stroke-width="2.6"/><circle cx="17" cy="17" r="10" fill="none" stroke="#9a5db5" stroke-width="3.4"/><rect x="15.2" y="11" width="3.6" height="12" rx="1.2" fill="#9a5db5"/></svg><svg class="abs" style="left:528px;top:21px;" width="34" height="34" viewBox="0 0 34 34"><path d="M3 6.5l5 4.5v19l-5-6z" fill="#444"/><path d="M3 6.5L24 3l6 4.5-22 3.5z" fill="#fff" stroke="#333" stroke-width="2" stroke-linejoin="round"/><path d="M8 11l22-3.5v20.5L8 31z" fill="#fff" stroke="#333" stroke-width="2.2" stroke-linejoin="round"/><text x="12" y="27" font-family="Liberation Serif,serif" font-weight="700" font-size="19" fill="#222" opacity=".999">N</text></svg><svg class="abs" style="left:622px;top:23px;" width="26" height="32" viewBox="0 0 26 32"><path d="M13 1.5C9 4 5.5 5 2 5.2V15c0 8 5 12.5 11 15.5 6-3 11-7.500 11-15.500V5.200C20.500 5 17 4 13 1.500z" fill="none" stroke="#444" stroke-width="2.300"/><path d="M13 1.5C9 4 5.5 5 2 5.2V15c0 8 5 12.5 11 15.500z" fill="#444"/></svg><div class="sb" style="left:688px;width:824px"></div><svg class="abs" style="left:855px;top:27px;" width="18" height="24" viewBox="0 0 18 24"><rect x="1" y="10" width="16" height="12.500" rx="2" fill="#7d7d7d"/><path d="M4.500 10V7a4.500 4.500 0 0 1 9 0v3" fill="none" stroke="#7d7d7d" stroke-width="2.300"/></svg><span class="t" style='left:881px;top:27.5px;font-size:24px;letter-spacing:0.94px;color:#4a4a4a;'>trello.com/b/XVFrzgbI/lands-of-ambustio</span><svg class="abs" style="left:1474px;top:24px;" width="28" height="30" viewBox="0 0 28 30"><path d="M22.500 9.500A10.500 10.500 0 1 0 24.500 17" fill="none" stroke="#6e6e6e" stroke-width="2.300" stroke-linecap="round"/><path d="M15.500 1.500l7.500 6.500-8.500 3.500z" fill="#6e6e6e"/></svg><div class="sb" style="left:1818px;width:74px"></div><div class="sb" style="left:1908px;width:74px"></div><svg class="abs" style="left:1842px;top:21px;" width="26" height="34" viewBox="0 0 26 34"><path d="M8 12H3.500v19h19V12H18" fill="none" stroke="#555" stroke-width="2.300" stroke-linejoin="round"/><path d="M13 21V3M7.500 8L13 2.500 18.500 8" fill="none" stroke="#555" stroke-width="2.300" stroke-linecap="round" stroke-linejoin="round"/></svg><svg class="abs" style="left:1930.5px;top:28px;" width="29" height="19.3" viewBox="0 0 33 22"><rect x="1.5" y="1.5" width="7.500" height="7.500" rx="1.500" fill="none" stroke="#555" stroke-width="2.200"/><rect x="1.5" y="12.5" width="7.500" height="7.500" rx="1.500" fill="none" stroke="#555" stroke-width="2.200"/><rect x="12.5" y="1.5" width="7.500" height="7.500" rx="1.500" fill="none" stroke="#555" stroke-width="2.200"/><rect x="12.5" y="12.5" width="7.500" height="7.500" rx="1.500" fill="none" stroke="#555" stroke-width="2.200"/><rect x="23.5" y="1.5" width="7.500" height="7.500" rx="1.500" fill="none" stroke="#555" stroke-width="2.200"/><rect x="23.5" y="12.5" width="7.500" height="7.500" rx="1.500" fill="none" stroke="#555" stroke-width="2.200"/></svg><div class="abs" style="left:1998px;top:24px;width:50px;height:51px;background:#cccccc;border-left:1px solid #b2b2b2;border-top:1px solid #b2b2b2"></div><svg class="abs" style="left:2010px;top:36px;" width="26" height="26" viewBox="0 0 26 26"><path d="M13 1v24M1 13h24" stroke="#7b7b7b" stroke-width="2"/></svg></div><div id="thd"></div><svg class="abs" style="left:12px;top:90px;" width="16" height="16" viewBox="0 0 16 16"><rect x="0" y="0" width="4" height="4" rx="1" fill="#42526e"/><rect x="0" y="6" width="4" height="4" rx="1" fill="#42526e"/><rect x="0" y="12" width="4" height="4" rx="1" fill="#42526e"/><rect x="6" y="0" width="4" height="4" rx="1" fill="#42526e"/><rect x="6" y="6" width="4" height="4" rx="1" fill="#42526e"/><rect x="6" y="12" width="4" height="4" rx="1" fill="#42526e"/><rect x="12" y="0" width="4" height="4" rx="1" fill="#42526e"/><rect x="12" y="6" width="4" height="4" rx="1" fill="#42526e"/><rect x="12" y="12" width="4" height="4" rx="1" fill="#42526e"/></svg><svg class="abs" style="left:42px;top:90px;" width="16" height="16" viewBox="0 0 16 16"><rect width="16" height="16" rx="2.500" fill="#44546f"/><rect x="2.600" y="2.600" width="4.300" height="9.500" rx="1" fill="#fff"/><rect x="9.100" y="2.600" width="4.300" height="6" rx="1" fill="#fff"/></svg><span class="t" style='left:62px;top:88px;font-size:21px;letter-spacing:-0.21px;font-weight:700;color:#44546f;'>Trello</span><span class="t" style='left:139px;top:88.2px;font-size:19px;letter-spacing:0.20px;'>Workspaces</span><svg class="abs" style="left:253px;top:95.5px;" width="12" height="7" viewBox="0 0 12 7"><path d="M1 1l5 5 l5 -5" fill="none" stroke="#172b4d" stroke-width="1.5" stroke-linecap="round" stroke-linejoin="round"/></svg><span class="t" style='left:293px;top:88.2px;font-size:19px;letter-spacing:0.36px;'>Recent</span><svg class="abs" style="left:363px;top:95.5px;" width="12" height="7" viewBox="0 0 12 7"><path d="M1 1l5 5 l5 -5" fill="none" stroke="#172b4d" stroke-width="1.5" stroke-linecap="round" stroke-linejoin="round"/></svg><span class="t" style='left:403px;top:88.2px;font-size:19px;letter-spacing:0.11px;'>Starred</span><svg class="abs" style="left:475px;top:95.5px;" width="12" height="7" viewBox="0 0 12 7"><path d="M1 1l5 5 l5 -5" fill="none" stroke="#172b4d" stroke-width="1.5" stroke-linecap="round" stroke-linejoin="round"/></svg><span class="t" style='left:516px;top:88.2px;font-size:19px;letter-spacing:0.30px;'>Templates</span><svg class="abs" style="left:613px;top:95.5px;" width="12" height="7" viewBox="0 0 12 7"><path d="M1 1l5 5 l5 -5" fill="none" stroke="#172b4d" stroke-width="1.5" stroke-linecap="round" stroke-linejoin="round"/></svg><div class="abs" style="left:650px;top:82px;width:83px;height:32px;border-radius:5px;background:#e6e8ec"></div><span class="t" style='left:662px;top:88.2px;font-size:19px;letter-spacing:0.19px;'>Create</span><div class="abs" style="left:1737px;top:82.500px;width:198px;height:31px;border-radius:5px;border:2px solid #d3d7de;background:#fff"></div><svg class="abs" style="left:1747px;top:92px;" width="13" height="13" viewBox="0 0 13 13"><circle cx="5.300" cy="5.300" r="3.900" fill="none" stroke="#172b4d" stroke-width="1.700"/><path d="M8.300 8.300l3.500 3.500" stroke="#172b4d" stroke-width="1.700" stroke-linecap="round"/></svg><span class="t" style='left:1768px;top:88.8px;font-size:19px;letter-spacing:-0.04px;'>Search</span><svg class="abs" style="left:1946px;top:87px;" width="22" height="22" viewBox="0 0 22 22"><g transform="rotate(38 11 11)"><path d="M11 3.500c-3.300 0-5.300 2.500-5.300 5.500v4.500l-1.700 2.500h14l-1.700-2.500V9c0-3-2-5.500-5.300-5.500z" fill="none" stroke="#172b4d" stroke-width="1.900" stroke-linejoin="round"/><path d="M9 18.500a2 2 0 0 0 4 0z" fill="#172b4d"/></g></svg><svg class="abs" style="left:1982px;top:87.5px;" width="20" height="20" viewBox="0 0 20 20"><circle cx="10" cy="10" r="8.300" fill="none" stroke="#172b4d" stroke-width="1.900"/><path d="M7.300 8a2.700 2.700 0 1 1 4 2.400c-.900.500-1.300 1-1.300 2" fill="none" stroke="#172b4d" stroke-width="1.800" stroke-linecap="round"/><circle cx="10" cy="14.800" r="1.100" fill="#172b4d"/></svg><svg class="abs" style="left:2011.5px;top:80.5px;overflow:visible;" width="33" height="33" viewBox="0 0 32 32"><circle cx="16" cy="16" r="16" fill="#a9ead0"/><clipPath id="av2028"><circle cx="16" cy="16" r="16"/></clipPath><g clip-path="url(#av2028)"><path d="M8 14c-1-8 5-12 10-11 6 0 9 5 8 11l1 9-3 1-1-8-12-2-1 6-2-1z" fill="#9a6a3c"/><ellipse cx="17" cy="15.500" rx="6" ry="7" fill="#f3d3b4"/><path d="M10.500 12c2-4 8-5 12-2l1 3c-4-3-9-2-13 1z" fill="#7c5228"/><circle cx="14.500" cy="15" r="1" fill="#3a2a1a"/><circle cx="19.500" cy="15" r="1" fill="#3a2a1a"/><path d="M15 19.500q2 1.500 4 0" stroke="#b0503c" stroke-width="1" fill="none"/><path d="M9 32c0-6 3-9 8-9s8 3 8 9z" fill="#eef0f4"/><path d="M22 24l4 1 1 7h-5z" fill="#f0e27a"/><path d="M6 22l4 2v8H5z" fill="#f0e27a"/></g></svg></div></body></html>
